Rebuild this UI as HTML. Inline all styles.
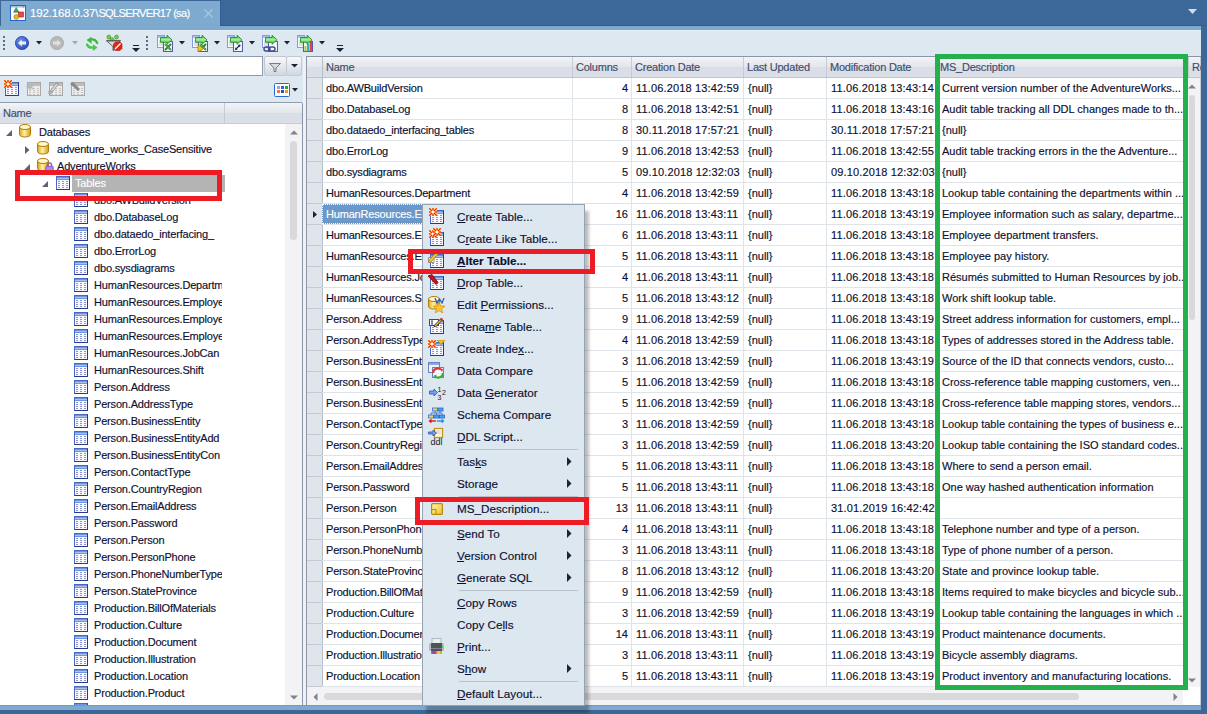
<!DOCTYPE html><html><head><meta charset="utf-8"><style>
html,body{margin:0;padding:0} body{width:1207px;height:714px;overflow:hidden;position:relative;background:#3b6899;font-family:"Liberation Sans", sans-serif;font-size:11px;color:#0c1030}
.t{position:absolute;white-space:nowrap;line-height:20px;height:20px;-webkit-text-stroke:0.15px currentColor}
</style></head><body>
<div style="position:absolute;left:1px;top:1px;width:219px;height:29px;background:#7eaacf"></div>
<div style="position:absolute;left:220px;top:0px;width:987px;height:26px;background:#3b6899;border-left:1px solid #345f90;border-bottom:1px solid #335a8a;box-sizing:border-box"></div>
<div style="position:absolute;left:0px;top:26px;width:1201px;height:4px;background:#7eaacf"></div>
<div style="position:absolute;left:0px;top:30px;width:1201px;height:1px;background:#e6eef5"></div>
<svg style="position:absolute;left:10px;top:5px" width="16" height="16" viewBox="0 0 16 16"><rect x="0.5" y="0.5" width="15" height="15" fill="#fafcff" stroke="#2a64c8"/><rect x="1" y="1" width="14" height="1.5" fill="#9ec0f0"/><rect x="12.5" y="1" width="1.5" height="1.5" fill="#f08030"/><path d="M6.2 2.5 L8.8 7.2 H3.6 Z" fill="#40a840" stroke="#1f6a1f" stroke-width="0.5"/><rect x="8.5" y="7" width="5" height="5" fill="#e84848" stroke="#a02020" stroke-width="0.6"/><circle cx="6.3" cy="12" r="2.4" fill="#e8b820" stroke="#a07810" stroke-width="0.6"/></svg>
<div class="t" style="left:30px;top:3px;color:#fff;font-size:11.5px"><span style="letter-spacing:-0.15px">192.168.0.37\</span><span style="letter-spacing:-0.75px;font-size:11.2px">SQLSERVER17 (sa)</span></div>
<svg style="position:absolute;left:204px;top:9px" width="9" height="9" viewBox="0 0 9 9"><path d="M0.5 0.5 L8.5 8.5 M8.5 0.5 L0.5 8.5" stroke="#a9c5de" stroke-width="1.3"/></svg>
<svg style="position:absolute;left:1188px;top:9px" width="9" height="5" viewBox="0 0 9 5"><path d="M0 0 H9 L4.5 5 Z" fill="#d9dcdf"/></svg>
<div style="position:absolute;left:0px;top:31px;width:1201px;height:25px;background:#dee8f1"></div>
<div style="position:absolute;left:307px;top:56px;width:894px;height:1px;background:#8a97a8"></div>
<div style="position:absolute;left:3px;top:36px;width:2px;height:2px;background:#5a6b85"></div><div style="position:absolute;left:3px;top:40px;width:2px;height:2px;background:#5a6b85"></div><div style="position:absolute;left:3px;top:44px;width:2px;height:2px;background:#5a6b85"></div><div style="position:absolute;left:3px;top:48px;width:2px;height:2px;background:#5a6b85"></div>
<div style="position:absolute;left:146px;top:36px;width:2px;height:2px;background:#5a6b85"></div><div style="position:absolute;left:146px;top:40px;width:2px;height:2px;background:#5a6b85"></div><div style="position:absolute;left:146px;top:44px;width:2px;height:2px;background:#5a6b85"></div><div style="position:absolute;left:146px;top:48px;width:2px;height:2px;background:#5a6b85"></div>
<svg style="position:absolute;left:15px;top:36px" width="14" height="14" viewBox="0 0 14 14"><defs><radialGradient id="bk" cx="0.4" cy="0.35" r="0.7"><stop offset="0" stop-color="#6a90f0"/><stop offset="1" stop-color="#2a4cc0"/></radialGradient></defs><circle cx="7" cy="7" r="6.6" fill="url(#bk)" stroke="#2a44a8" stroke-width="0.8"/><path d="M3 7 L6.8 3.4 V5.6 H11 V8.4 H6.8 V10.6 Z" fill="#f4f0e8"/></svg>
<svg style="position:absolute;left:36px;top:41px" width="6" height="4" viewBox="0 0 6 4"><path d="M0 0 H6 L3.0 3.5 Z" fill="#1a2438"/></svg>
<svg style="position:absolute;left:50px;top:36px" width="14" height="14" viewBox="0 0 14 14"><circle cx="7" cy="7" r="6.6" fill="#b8b8b8" stroke="#a8a8a8" stroke-width="0.8"/><path d="M11 7 L7.2 3.4 V5.6 H3 V8.4 H7.2 V10.6 Z" fill="#e0e0e0"/></svg>
<svg style="position:absolute;left:72px;top:41px" width="6" height="4" viewBox="0 0 6 4"><path d="M0 0 H6 L3.0 3.5 Z" fill="#a0a8b4"/></svg>
<svg style="position:absolute;left:85px;top:35px" width="14" height="17" viewBox="0 0 14 17"><path d="M5 4.8 Q10 3.2 12.3 8" stroke="#3cb83c" stroke-width="2.2" fill="none" stroke-linecap="round"/><path d="M1.5 5 L6.5 1.8 L6.5 8.8 Z" fill="#3cb83c"/><path d="M2 9.5 Q3.5 13.2 8.5 12.6" stroke="#48c848" stroke-width="2.2" fill="none" stroke-linecap="round"/><path d="M12.5 12.5 L8 9.3 L8 16 Z" fill="#48c848"/></svg>
<svg style="position:absolute;left:106px;top:34px" width="18" height="17" viewBox="0 0 18 17"><circle cx="2.8" cy="3" r="1.9" fill="#78d050" stroke="#3c9a20" stroke-width="0.7"/><circle cx="6" cy="5.6" r="1.9" fill="#78d050" stroke="#3c9a20" stroke-width="0.7"/><circle cx="10.5" cy="3" r="1.9" fill="#78d050" stroke="#3c9a20" stroke-width="0.7"/><path d="M0.5 6.8 H14.5 L8 12.5 V16.5 H7 V12.5 Z" fill="#dcdcdc" stroke="#5a5a5a" stroke-width="0.9"/><path d="M0.5 6.6 H14.5" stroke="#606060" stroke-width="1.4"/><path d="M9.5 8 L14 8 L16 10 V14.5 L14 16.5 H9.5 L7.5 14.5 V10 Z" fill="#e02818" stroke="#b01010" stroke-width="0.6"/><path d="M9 15 L14.5 9.5" stroke="#fff" stroke-width="1.2"/></svg>
<svg style="position:absolute;left:132px;top:45px" width="8" height="8" viewBox="0 0 8 8"><rect x="1" y="0" width="6" height="1" fill="#1a2438"/><path d="M0 3 H8 L4 7 Z" fill="#1a2438"/></svg>
<svg style="position:absolute;left:336px;top:45px" width="8" height="8" viewBox="0 0 8 8"><rect x="1" y="0" width="6" height="1" fill="#1a2438"/><path d="M0 3 H8 L4 7 Z" fill="#1a2438"/></svg>
<svg style="position:absolute;left:154px;top:35px" width="19" height="17" viewBox="0 0 19 17"><rect x="3.5" y="0.5" width="7" height="12" fill="#fafbff" stroke="#8a9ae0"/><rect x="4" y="1" width="6" height="2" fill="#a8c0f0"/><path d="M5 6 H9 M5 8 H9 M5 10 H9" stroke="#b8b8c0" stroke-width="0.8"/><rect x="9.5" y="6.5" width="9" height="10" fill="#fbfbfd" stroke="#5a5aa8" stroke-width="1.1"/><path d="M11 9 L17 15 M17 9 L11 15" stroke="#2a8a2a" stroke-width="2"/><path d="M11 9 L17 15" stroke="#60c060" stroke-width="0.8"/><defs><linearGradient id="eg0" x1="0" y1="0" x2="0" y2="1"><stop offset="0" stop-color="#30b030"/><stop offset="0.5" stop-color="#a8f0a0"/><stop offset="1" stop-color="#20a020"/></linearGradient></defs><path d="M6.5 2.5 H13 V0.3 L18 4.8 L13 9.3 V7.3 H6.5 Z" fill="url(#eg0)" stroke="#158a15" stroke-width="0.8"/></svg>
<svg style="position:absolute;left:179px;top:41px" width="6" height="4" viewBox="0 0 6 4"><path d="M0 0 H6 L3.0 3.5 Z" fill="#1a2438"/></svg>
<svg style="position:absolute;left:189px;top:35px" width="19" height="17" viewBox="0 0 19 17"><rect x="3.5" y="0.5" width="7" height="12" fill="#fafbff" stroke="#8a9ae0"/><rect x="4" y="1" width="6" height="2" fill="#a8c0f0"/><path d="M5 6 H9 M5 8 H9 M5 10 H9" stroke="#b8b8c0" stroke-width="0.8"/><rect x="9.5" y="6.5" width="9" height="10" fill="#fbfbfd" stroke="#5a5aa8" stroke-width="1.1"/><path d="M11 9 L17 15 M17 9 L11 15" stroke="#2a8a2a" stroke-width="2"/><path d="M11 9 L17 15" stroke="#60c060" stroke-width="0.8"/><path d="M9 10 L14.5 13.5 L9 17 Z" fill="#f8c820" stroke="#a07800" stroke-width="0.7"/><defs><linearGradient id="eg1" x1="0" y1="0" x2="0" y2="1"><stop offset="0" stop-color="#30b030"/><stop offset="0.5" stop-color="#a8f0a0"/><stop offset="1" stop-color="#20a020"/></linearGradient></defs><path d="M6.5 2.5 H13 V0.3 L18 4.8 L13 9.3 V7.3 H6.5 Z" fill="url(#eg1)" stroke="#158a15" stroke-width="0.8"/></svg>
<svg style="position:absolute;left:214px;top:41px" width="6" height="4" viewBox="0 0 6 4"><path d="M0 0 H6 L3.0 3.5 Z" fill="#1a2438"/></svg>
<svg style="position:absolute;left:224px;top:35px" width="19" height="17" viewBox="0 0 19 17"><rect x="3.5" y="0.5" width="7" height="12" fill="#fafbff" stroke="#8a9ae0"/><rect x="4" y="1" width="6" height="2" fill="#a8c0f0"/><path d="M5 6 H9 M5 8 H9 M5 10 H9" stroke="#b8b8c0" stroke-width="0.8"/><rect x="9.5" y="6.5" width="9" height="10" fill="#fbfbfd" stroke="#5a5aa8" stroke-width="1.1"/><path d="M11.5 14.5 L16 10" stroke="#202860" stroke-width="1.3"/><path d="M16.5 9.5 L13.8 10 L16 12.2 Z M11 15 L13.7 14.5 L11.5 12.3 Z" fill="#202860"/><defs><linearGradient id="eg2" x1="0" y1="0" x2="0" y2="1"><stop offset="0" stop-color="#30b030"/><stop offset="0.5" stop-color="#a8f0a0"/><stop offset="1" stop-color="#20a020"/></linearGradient></defs><path d="M6.5 2.5 H13 V0.3 L18 4.8 L13 9.3 V7.3 H6.5 Z" fill="url(#eg2)" stroke="#158a15" stroke-width="0.8"/></svg>
<svg style="position:absolute;left:249px;top:41px" width="6" height="4" viewBox="0 0 6 4"><path d="M0 0 H6 L3.0 3.5 Z" fill="#1a2438"/></svg>
<svg style="position:absolute;left:259px;top:35px" width="19" height="17" viewBox="0 0 19 17"><rect x="3.5" y="0.5" width="7" height="12" fill="#fafbff" stroke="#8a9ae0"/><rect x="4" y="1" width="6" height="2" fill="#a8c0f0"/><path d="M5 6 H9 M5 8 H9 M5 10 H9" stroke="#b8b8c0" stroke-width="0.8"/><rect x="9.5" y="6.5" width="9" height="10" fill="#fbfbfd" stroke="#5a5aa8" stroke-width="1.1"/><rect x="5" y="12" width="6" height="4" rx="2" fill="none" stroke="#404890" stroke-width="1.4"/><rect x="10" y="12" width="6" height="4" rx="2" fill="none" stroke="#404890" stroke-width="1.4"/><defs><linearGradient id="eg3" x1="0" y1="0" x2="0" y2="1"><stop offset="0" stop-color="#30b030"/><stop offset="0.5" stop-color="#a8f0a0"/><stop offset="1" stop-color="#20a020"/></linearGradient></defs><path d="M6.5 2.5 H13 V0.3 L18 4.8 L13 9.3 V7.3 H6.5 Z" fill="url(#eg3)" stroke="#158a15" stroke-width="0.8"/></svg>
<svg style="position:absolute;left:284px;top:41px" width="6" height="4" viewBox="0 0 6 4"><path d="M0 0 H6 L3.0 3.5 Z" fill="#1a2438"/></svg>
<svg style="position:absolute;left:294px;top:35px" width="19" height="17" viewBox="0 0 19 17"><rect x="3.5" y="0.5" width="7" height="12" fill="#fafbff" stroke="#8a9ae0"/><rect x="4" y="1" width="6" height="2" fill="#a8c0f0"/><path d="M5 6 H9 M5 8 H9 M5 10 H9" stroke="#b8b8c0" stroke-width="0.8"/><rect x="9.5" y="6.5" width="9" height="10" fill="#fbfbfd" stroke="#5a5aa8" stroke-width="1.1"/><rect x="10.5" y="11" width="2" height="5" fill="#a0d030"/><rect x="13" y="9" width="2" height="7" fill="#30b0e0"/><rect x="15.5" y="7" width="2.5" height="9" fill="#e84830"/><defs><linearGradient id="eg4" x1="0" y1="0" x2="0" y2="1"><stop offset="0" stop-color="#30b030"/><stop offset="0.5" stop-color="#a8f0a0"/><stop offset="1" stop-color="#20a020"/></linearGradient></defs><path d="M6.5 2.5 H13 V0.3 L18 4.8 L13 9.3 V7.3 H6.5 Z" fill="url(#eg4)" stroke="#158a15" stroke-width="0.8"/></svg>
<svg style="position:absolute;left:319px;top:41px" width="6" height="4" viewBox="0 0 6 4"><path d="M0 0 H6 L3.0 3.5 Z" fill="#1a2438"/></svg>
<div style="position:absolute;left:0px;top:56px;width:302px;height:650px;background:#dee8f1"></div>
<div style="position:absolute;left:0px;top:56px;width:263px;height:20px;background:#fff;border:1px solid #8e9cb2;border-left:none;box-sizing:border-box"></div>
<div style="position:absolute;left:0px;top:103px;width:302px;height:603px;background:#fff"></div>
<div style="position:absolute;left:264px;top:56px;width:23px;height:20px;background:linear-gradient(#f7f8fa,#e6e9ee 50%,#d2d7e0);border:1px solid #c4c8d0;box-sizing:border-box;border-radius:2px"></div>
<svg style="position:absolute;left:269px;top:63px" width="12" height="9" viewBox="0 0 12 9"><path d="M0.5 0.5 H11.5 L7 5 V8.5 H5 V5 Z" fill="#d8dade" stroke="#6c727c" stroke-width="0.9"/></svg>
<div style="position:absolute;left:286px;top:56px;width:16px;height:20px;background:linear-gradient(#f7f8fa,#e6e9ee 50%,#d2d7e0);border:1px solid #c4c8d0;box-sizing:border-box;border-radius:2px"></div>
<svg style="position:absolute;left:291px;top:64px" width="7" height="4" viewBox="0 0 7 4"><path d="M0 0 H7 L3.5 3.5 Z" fill="#1a2438"/></svg>
<div style="position:absolute;left:0px;top:76px;width:302px;height:26px;background:#dee8f1"></div>
<div style="position:absolute;left:0px;top:102px;width:302px;height:1px;background:#8e9cb2"></div>
<svg style="position:absolute;left:5px;top:82px" width="14" height="14" viewBox="0 0 14 14"><rect x="0.5" y="0.5" width="13" height="13" fill="#f8f8fe" stroke="#4a68c0"/><path d="M0.5 13.5 H13.5 V0.5" fill="none" stroke="#28388a"/><rect x="1" y="1" width="12" height="3" fill="#6a94e4"/><rect x="1" y="2" width="12" height="1" fill="#a6c2f2"/><g fill="#8a92d8"><rect x="2" y="5" width="2" height="1"/><rect x="2" y="7" width="2" height="1"/><rect x="2" y="9" width="2" height="1"/><rect x="2" y="11" width="2" height="1"/><rect x="6" y="5" width="2" height="1"/><rect x="6" y="7" width="2" height="1"/><rect x="6" y="9" width="2" height="1"/><rect x="6" y="11" width="2" height="1"/><rect x="10" y="5" width="2" height="1"/><rect x="10" y="7" width="2" height="1"/><rect x="10" y="9" width="2" height="1"/><rect x="10" y="11" width="2" height="1"/></g></svg>
<svg style="position:absolute;left:4px;top:80px" width="8" height="8" viewBox="0 0 8 8"><rect x="0.3" y="0.3" width="7.4" height="7.4" fill="#fff48a"/><path d="M5.60 4.00 L8.00 4.00" stroke="#f01a00" stroke-width="1.3"/><path d="M5.13 5.13 L7.68 7.68" stroke="#f01a00" stroke-width="1.3"/><path d="M4.00 5.60 L4.00 8.00" stroke="#f01a00" stroke-width="1.3"/><path d="M2.87 5.13 L0.32 7.68" stroke="#f01a00" stroke-width="1.3"/><path d="M2.40 4.00 L0.00 4.00" stroke="#f01a00" stroke-width="1.3"/><path d="M2.87 2.87 L0.32 0.32" stroke="#f01a00" stroke-width="1.3"/><path d="M4.00 2.40 L4.00 0.00" stroke="#f01a00" stroke-width="1.3"/><path d="M5.13 2.87 L7.68 0.32" stroke="#f01a00" stroke-width="1.3"/><circle cx="4.0" cy="4.0" r="1.1" fill="#ffffff"/></svg>
<svg style="position:absolute;left:26px;top:82px" width="15" height="15" viewBox="0 0 15 15"><rect x="1.5" y="0.5" width="13" height="13" fill="#ececec" stroke="#a8a8a8"/><rect x="2" y="1" width="12" height="3" fill="#bcbcbc"/><g fill="#c4c4c4"><rect x="3" y="6" width="2" height="1"/><rect x="3" y="8" width="2" height="1"/><rect x="3" y="10" width="2" height="1"/><rect x="3" y="12" width="2" height="1"/><rect x="7" y="6" width="2" height="1"/><rect x="7" y="8" width="2" height="1"/><rect x="7" y="10" width="2" height="1"/><rect x="7" y="12" width="2" height="1"/><rect x="11" y="6" width="2" height="1"/><rect x="11" y="8" width="2" height="1"/><rect x="11" y="10" width="2" height="1"/><rect x="11" y="12" width="2" height="1"/></g><g stroke="#b8b8b8" stroke-width="1.2"><path d="M4 0 V8 M0 4 H8 M1 1 L7 7 M7 1 L1 7"/></g></svg>
<svg style="position:absolute;left:48px;top:82px" width="15" height="15" viewBox="0 0 15 15"><rect x="1.5" y="0.5" width="13" height="13" fill="#ececec" stroke="#a8a8a8"/><rect x="2" y="1" width="12" height="3" fill="#bcbcbc"/><g fill="#c4c4c4"><rect x="3" y="6" width="2" height="1"/><rect x="3" y="8" width="2" height="1"/><rect x="3" y="10" width="2" height="1"/><rect x="3" y="12" width="2" height="1"/><rect x="7" y="6" width="2" height="1"/><rect x="7" y="8" width="2" height="1"/><rect x="7" y="10" width="2" height="1"/><rect x="7" y="12" width="2" height="1"/><rect x="11" y="6" width="2" height="1"/><rect x="11" y="8" width="2" height="1"/><rect x="11" y="10" width="2" height="1"/><rect x="11" y="12" width="2" height="1"/></g><path d="M2 11 L9 2" stroke="#9a9a9a" stroke-width="3" stroke-linecap="round"/><path d="M2 11 L9 2" stroke="#dcdcdc" stroke-width="1.5"/><path d="M0.5 9.5 H5" stroke="#a0a0a0" stroke-width="1.5"/></svg>
<svg style="position:absolute;left:70px;top:82px" width="15" height="15" viewBox="0 0 15 15"><rect x="1.5" y="0.5" width="13" height="13" fill="#ececec" stroke="#a8a8a8"/><rect x="2" y="1" width="12" height="3" fill="#bcbcbc"/><g fill="#c4c4c4"><rect x="3" y="6" width="2" height="1"/><rect x="3" y="8" width="2" height="1"/><rect x="3" y="10" width="2" height="1"/><rect x="3" y="12" width="2" height="1"/><rect x="7" y="6" width="2" height="1"/><rect x="7" y="8" width="2" height="1"/><rect x="7" y="10" width="2" height="1"/><rect x="7" y="12" width="2" height="1"/><rect x="11" y="6" width="2" height="1"/><rect x="11" y="8" width="2" height="1"/><rect x="11" y="10" width="2" height="1"/><rect x="11" y="12" width="2" height="1"/></g><path d="M0 2 L3 0 L10 7 L8 9 Z" fill="#8a8a8a"/></svg>
<svg style="position:absolute;left:274px;top:83px" width="16" height="14" viewBox="0 0 16 14"><rect x="0.5" y="0.5" width="15" height="13" rx="1" fill="#fff" stroke="#2a6ad0"/><rect x="3" y="3" width="3" height="3" fill="#9aa0e0"/><rect x="7" y="3" width="3" height="3" fill="#2a6ad0"/><rect x="11" y="3" width="3" height="3" fill="#30a040"/><rect x="3" y="7" width="3" height="3" fill="#f07050"/><rect x="7" y="7" width="3" height="3" fill="#2a50b0"/><rect x="11" y="7" width="3" height="3" fill="#e0a030"/></svg>
<svg style="position:absolute;left:292px;top:88px" width="6" height="4" viewBox="0 0 6 4"><path d="M0 0 H6 L3.0 3.5 Z" fill="#1a2438"/></svg>
<div style="position:absolute;left:0px;top:103px;width:302px;height:20px;background:linear-gradient(#f3f5f7 0%,#e9ecf0 25%,#e3e6ed 50%,#dadee7 50%,#dadee7 90%,#dfe2ea 100%)"></div>
<div style="position:absolute;left:0px;top:123px;width:302px;height:1px;background:#c5cad5"></div>
<div style="position:absolute;left:224px;top:103px;width:1px;height:20px;background:#c5cad5"></div>
<div class="t" style="left:3px;top:103px;color:#3f4d6b;letter-spacing:-0.22px">Name</div>
<svg style="position:absolute;left:6px;top:130px" width="7" height="7" viewBox="0 0 7 7"><path d="M6 0 V6 H0 Z" fill="#5a6478"/></svg>
<svg style="position:absolute;left:19px;top:124px" width="12" height="14" viewBox="0 0 12 14"><defs><linearGradient id="dbg" x1="0" x2="1"><stop offset="0" stop-color="#d9a520"/><stop offset="0.45" stop-color="#fff2a0"/><stop offset="1" stop-color="#d49a18"/></linearGradient></defs><path d="M0.5 3 V10.5 A5.5 2.5 0 0 0 11.5 10.5 V3" fill="url(#dbg)" stroke="#b07c10"/><ellipse cx="6" cy="3" rx="5.5" ry="2.5" fill="#fff7c8" stroke="#b07c10"/></svg>
<div class="t" style="left:39px;top:123px;line-height:18px;letter-spacing:-0.18px">Databases</div>
<svg style="position:absolute;left:25px;top:146px" width="5" height="8" viewBox="0 0 5 8"><path d="M0 0 L4.5 4 L0 8 Z" fill="#5a6478"/></svg>
<svg style="position:absolute;left:37px;top:141px" width="12" height="14" viewBox="0 0 12 14"><defs><linearGradient id="dbg" x1="0" x2="1"><stop offset="0" stop-color="#d9a520"/><stop offset="0.45" stop-color="#fff2a0"/><stop offset="1" stop-color="#d49a18"/></linearGradient></defs><path d="M0.5 3 V10.5 A5.5 2.5 0 0 0 11.5 10.5 V3" fill="url(#dbg)" stroke="#b07c10"/><ellipse cx="6" cy="3" rx="5.5" ry="2.5" fill="#fff7c8" stroke="#b07c10"/></svg>
<div class="t" style="left:57px;top:140px;line-height:18px;letter-spacing:-0.18px">adventure_works_CaseSensitive</div>
<svg style="position:absolute;left:24px;top:164px" width="7" height="7" viewBox="0 0 7 7"><path d="M6 0 V6 H0 Z" fill="#5a6478"/></svg>
<svg style="position:absolute;left:37px;top:158px" width="12" height="14" viewBox="0 0 12 14"><defs><linearGradient id="dbg" x1="0" x2="1"><stop offset="0" stop-color="#d9a520"/><stop offset="0.45" stop-color="#fff2a0"/><stop offset="1" stop-color="#d49a18"/></linearGradient></defs><path d="M0.5 3 V10.5 A5.5 2.5 0 0 0 11.5 10.5 V3" fill="url(#dbg)" stroke="#b07c10"/><ellipse cx="6" cy="3" rx="5.5" ry="2.5" fill="#fff7c8" stroke="#b07c10"/></svg>
<svg style="position:absolute;left:45px;top:162px" width="9" height="9" viewBox="0 0 9 9"><path d="M2.5 4.5 V3 A2 2 0 0 1 6.5 3 V4.5" fill="none" stroke="#8a5ad0" stroke-width="1.4"/><rect x="0.8" y="4.3" width="7.4" height="4.5" rx="0.8" fill="#b08ae8" stroke="#7a48c0" stroke-width="0.8"/></svg>
<div class="t" style="left:57px;top:157px;line-height:18px;letter-spacing:-0.18px">AdventureWorks</div>
<svg style="position:absolute;left:42px;top:181px" width="7" height="7" viewBox="0 0 7 7"><path d="M6 0 V6 H0 Z" fill="#5a6478"/></svg>
<svg style="position:absolute;left:56px;top:176px" width="14" height="14" viewBox="0 0 14 14"><rect x="0.5" y="0.5" width="13" height="13" fill="#f8f8fe" stroke="#4a68c0"/><path d="M0.5 13.5 H13.5 V0.5" fill="none" stroke="#28388a"/><rect x="1" y="1" width="12" height="3" fill="#6a94e4"/><rect x="1" y="2" width="12" height="1" fill="#a6c2f2"/><g fill="#8a92d8"><rect x="2" y="5" width="2" height="1"/><rect x="2" y="7" width="2" height="1"/><rect x="2" y="9" width="2" height="1"/><rect x="2" y="11" width="2" height="1"/><rect x="6" y="5" width="2" height="1"/><rect x="6" y="7" width="2" height="1"/><rect x="6" y="9" width="2" height="1"/><rect x="6" y="11" width="2" height="1"/><rect x="10" y="5" width="2" height="1"/><rect x="10" y="7" width="2" height="1"/><rect x="10" y="9" width="2" height="1"/><rect x="10" y="11" width="2" height="1"/></g></svg>
<div style="position:absolute;left:72px;top:175px;width:153px;height:17px;background:#b4b4b4"></div>
<div class="t" style="left:75px;top:174px;line-height:18px;color:#fff;letter-spacing:-0.18px">Tables</div>
<div style="position:absolute;left:0;top:124px;width:222px;height:581px;overflow:hidden">
<svg style="position:absolute;left:74px;top:69px" width="14" height="14" viewBox="0 0 14 14"><rect x="0.5" y="0.5" width="13" height="13" fill="#f8f8fe" stroke="#4a68c0"/><path d="M0.5 13.5 H13.5 V0.5" fill="none" stroke="#28388a"/><rect x="1" y="1" width="12" height="3" fill="#6a94e4"/><rect x="1" y="2" width="12" height="1" fill="#a6c2f2"/><g fill="#8a92d8"><rect x="2" y="5" width="2" height="1"/><rect x="2" y="7" width="2" height="1"/><rect x="2" y="9" width="2" height="1"/><rect x="2" y="11" width="2" height="1"/><rect x="6" y="5" width="2" height="1"/><rect x="6" y="7" width="2" height="1"/><rect x="6" y="9" width="2" height="1"/><rect x="6" y="11" width="2" height="1"/><rect x="10" y="5" width="2" height="1"/><rect x="10" y="7" width="2" height="1"/><rect x="10" y="9" width="2" height="1"/><rect x="10" y="11" width="2" height="1"/></g></svg>
<div class="t" style="left:94px;top:67px;line-height:18px;letter-spacing:-0.18px">dbo.AWBuildVersion</div>
<svg style="position:absolute;left:74px;top:86px" width="14" height="14" viewBox="0 0 14 14"><rect x="0.5" y="0.5" width="13" height="13" fill="#f8f8fe" stroke="#4a68c0"/><path d="M0.5 13.5 H13.5 V0.5" fill="none" stroke="#28388a"/><rect x="1" y="1" width="12" height="3" fill="#6a94e4"/><rect x="1" y="2" width="12" height="1" fill="#a6c2f2"/><g fill="#8a92d8"><rect x="2" y="5" width="2" height="1"/><rect x="2" y="7" width="2" height="1"/><rect x="2" y="9" width="2" height="1"/><rect x="2" y="11" width="2" height="1"/><rect x="6" y="5" width="2" height="1"/><rect x="6" y="7" width="2" height="1"/><rect x="6" y="9" width="2" height="1"/><rect x="6" y="11" width="2" height="1"/><rect x="10" y="5" width="2" height="1"/><rect x="10" y="7" width="2" height="1"/><rect x="10" y="9" width="2" height="1"/><rect x="10" y="11" width="2" height="1"/></g></svg>
<div class="t" style="left:94px;top:84px;line-height:18px;letter-spacing:-0.18px">dbo.DatabaseLog</div>
<svg style="position:absolute;left:74px;top:103px" width="14" height="14" viewBox="0 0 14 14"><rect x="0.5" y="0.5" width="13" height="13" fill="#f8f8fe" stroke="#4a68c0"/><path d="M0.5 13.5 H13.5 V0.5" fill="none" stroke="#28388a"/><rect x="1" y="1" width="12" height="3" fill="#6a94e4"/><rect x="1" y="2" width="12" height="1" fill="#a6c2f2"/><g fill="#8a92d8"><rect x="2" y="5" width="2" height="1"/><rect x="2" y="7" width="2" height="1"/><rect x="2" y="9" width="2" height="1"/><rect x="2" y="11" width="2" height="1"/><rect x="6" y="5" width="2" height="1"/><rect x="6" y="7" width="2" height="1"/><rect x="6" y="9" width="2" height="1"/><rect x="6" y="11" width="2" height="1"/><rect x="10" y="5" width="2" height="1"/><rect x="10" y="7" width="2" height="1"/><rect x="10" y="9" width="2" height="1"/><rect x="10" y="11" width="2" height="1"/></g></svg>
<div class="t" style="left:94px;top:101px;line-height:18px;letter-spacing:-0.18px">dbo.dataedo_interfacing_</div>
<svg style="position:absolute;left:74px;top:120px" width="14" height="14" viewBox="0 0 14 14"><rect x="0.5" y="0.5" width="13" height="13" fill="#f8f8fe" stroke="#4a68c0"/><path d="M0.5 13.5 H13.5 V0.5" fill="none" stroke="#28388a"/><rect x="1" y="1" width="12" height="3" fill="#6a94e4"/><rect x="1" y="2" width="12" height="1" fill="#a6c2f2"/><g fill="#8a92d8"><rect x="2" y="5" width="2" height="1"/><rect x="2" y="7" width="2" height="1"/><rect x="2" y="9" width="2" height="1"/><rect x="2" y="11" width="2" height="1"/><rect x="6" y="5" width="2" height="1"/><rect x="6" y="7" width="2" height="1"/><rect x="6" y="9" width="2" height="1"/><rect x="6" y="11" width="2" height="1"/><rect x="10" y="5" width="2" height="1"/><rect x="10" y="7" width="2" height="1"/><rect x="10" y="9" width="2" height="1"/><rect x="10" y="11" width="2" height="1"/></g></svg>
<div class="t" style="left:94px;top:118px;line-height:18px;letter-spacing:-0.18px">dbo.ErrorLog</div>
<svg style="position:absolute;left:74px;top:137px" width="14" height="14" viewBox="0 0 14 14"><rect x="0.5" y="0.5" width="13" height="13" fill="#f8f8fe" stroke="#4a68c0"/><path d="M0.5 13.5 H13.5 V0.5" fill="none" stroke="#28388a"/><rect x="1" y="1" width="12" height="3" fill="#6a94e4"/><rect x="1" y="2" width="12" height="1" fill="#a6c2f2"/><g fill="#8a92d8"><rect x="2" y="5" width="2" height="1"/><rect x="2" y="7" width="2" height="1"/><rect x="2" y="9" width="2" height="1"/><rect x="2" y="11" width="2" height="1"/><rect x="6" y="5" width="2" height="1"/><rect x="6" y="7" width="2" height="1"/><rect x="6" y="9" width="2" height="1"/><rect x="6" y="11" width="2" height="1"/><rect x="10" y="5" width="2" height="1"/><rect x="10" y="7" width="2" height="1"/><rect x="10" y="9" width="2" height="1"/><rect x="10" y="11" width="2" height="1"/></g></svg>
<div class="t" style="left:94px;top:135px;line-height:18px;letter-spacing:-0.18px">dbo.sysdiagrams</div>
<svg style="position:absolute;left:74px;top:154px" width="14" height="14" viewBox="0 0 14 14"><rect x="0.5" y="0.5" width="13" height="13" fill="#f8f8fe" stroke="#4a68c0"/><path d="M0.5 13.5 H13.5 V0.5" fill="none" stroke="#28388a"/><rect x="1" y="1" width="12" height="3" fill="#6a94e4"/><rect x="1" y="2" width="12" height="1" fill="#a6c2f2"/><g fill="#8a92d8"><rect x="2" y="5" width="2" height="1"/><rect x="2" y="7" width="2" height="1"/><rect x="2" y="9" width="2" height="1"/><rect x="2" y="11" width="2" height="1"/><rect x="6" y="5" width="2" height="1"/><rect x="6" y="7" width="2" height="1"/><rect x="6" y="9" width="2" height="1"/><rect x="6" y="11" width="2" height="1"/><rect x="10" y="5" width="2" height="1"/><rect x="10" y="7" width="2" height="1"/><rect x="10" y="9" width="2" height="1"/><rect x="10" y="11" width="2" height="1"/></g></svg>
<div class="t" style="left:94px;top:152px;line-height:18px;letter-spacing:-0.18px">HumanResources.Departm</div>
<svg style="position:absolute;left:74px;top:171px" width="14" height="14" viewBox="0 0 14 14"><rect x="0.5" y="0.5" width="13" height="13" fill="#f8f8fe" stroke="#4a68c0"/><path d="M0.5 13.5 H13.5 V0.5" fill="none" stroke="#28388a"/><rect x="1" y="1" width="12" height="3" fill="#6a94e4"/><rect x="1" y="2" width="12" height="1" fill="#a6c2f2"/><g fill="#8a92d8"><rect x="2" y="5" width="2" height="1"/><rect x="2" y="7" width="2" height="1"/><rect x="2" y="9" width="2" height="1"/><rect x="2" y="11" width="2" height="1"/><rect x="6" y="5" width="2" height="1"/><rect x="6" y="7" width="2" height="1"/><rect x="6" y="9" width="2" height="1"/><rect x="6" y="11" width="2" height="1"/><rect x="10" y="5" width="2" height="1"/><rect x="10" y="7" width="2" height="1"/><rect x="10" y="9" width="2" height="1"/><rect x="10" y="11" width="2" height="1"/></g></svg>
<div class="t" style="left:94px;top:169px;line-height:18px;letter-spacing:-0.18px">HumanResources.Employe</div>
<svg style="position:absolute;left:74px;top:188px" width="14" height="14" viewBox="0 0 14 14"><rect x="0.5" y="0.5" width="13" height="13" fill="#f8f8fe" stroke="#4a68c0"/><path d="M0.5 13.5 H13.5 V0.5" fill="none" stroke="#28388a"/><rect x="1" y="1" width="12" height="3" fill="#6a94e4"/><rect x="1" y="2" width="12" height="1" fill="#a6c2f2"/><g fill="#8a92d8"><rect x="2" y="5" width="2" height="1"/><rect x="2" y="7" width="2" height="1"/><rect x="2" y="9" width="2" height="1"/><rect x="2" y="11" width="2" height="1"/><rect x="6" y="5" width="2" height="1"/><rect x="6" y="7" width="2" height="1"/><rect x="6" y="9" width="2" height="1"/><rect x="6" y="11" width="2" height="1"/><rect x="10" y="5" width="2" height="1"/><rect x="10" y="7" width="2" height="1"/><rect x="10" y="9" width="2" height="1"/><rect x="10" y="11" width="2" height="1"/></g></svg>
<div class="t" style="left:94px;top:186px;line-height:18px;letter-spacing:-0.18px">HumanResources.Employe</div>
<svg style="position:absolute;left:74px;top:205px" width="14" height="14" viewBox="0 0 14 14"><rect x="0.5" y="0.5" width="13" height="13" fill="#f8f8fe" stroke="#4a68c0"/><path d="M0.5 13.5 H13.5 V0.5" fill="none" stroke="#28388a"/><rect x="1" y="1" width="12" height="3" fill="#6a94e4"/><rect x="1" y="2" width="12" height="1" fill="#a6c2f2"/><g fill="#8a92d8"><rect x="2" y="5" width="2" height="1"/><rect x="2" y="7" width="2" height="1"/><rect x="2" y="9" width="2" height="1"/><rect x="2" y="11" width="2" height="1"/><rect x="6" y="5" width="2" height="1"/><rect x="6" y="7" width="2" height="1"/><rect x="6" y="9" width="2" height="1"/><rect x="6" y="11" width="2" height="1"/><rect x="10" y="5" width="2" height="1"/><rect x="10" y="7" width="2" height="1"/><rect x="10" y="9" width="2" height="1"/><rect x="10" y="11" width="2" height="1"/></g></svg>
<div class="t" style="left:94px;top:203px;line-height:18px;letter-spacing:-0.18px">HumanResources.Employe</div>
<svg style="position:absolute;left:74px;top:222px" width="14" height="14" viewBox="0 0 14 14"><rect x="0.5" y="0.5" width="13" height="13" fill="#f8f8fe" stroke="#4a68c0"/><path d="M0.5 13.5 H13.5 V0.5" fill="none" stroke="#28388a"/><rect x="1" y="1" width="12" height="3" fill="#6a94e4"/><rect x="1" y="2" width="12" height="1" fill="#a6c2f2"/><g fill="#8a92d8"><rect x="2" y="5" width="2" height="1"/><rect x="2" y="7" width="2" height="1"/><rect x="2" y="9" width="2" height="1"/><rect x="2" y="11" width="2" height="1"/><rect x="6" y="5" width="2" height="1"/><rect x="6" y="7" width="2" height="1"/><rect x="6" y="9" width="2" height="1"/><rect x="6" y="11" width="2" height="1"/><rect x="10" y="5" width="2" height="1"/><rect x="10" y="7" width="2" height="1"/><rect x="10" y="9" width="2" height="1"/><rect x="10" y="11" width="2" height="1"/></g></svg>
<div class="t" style="left:94px;top:220px;line-height:18px;letter-spacing:-0.18px">HumanResources.JobCan</div>
<svg style="position:absolute;left:74px;top:239px" width="14" height="14" viewBox="0 0 14 14"><rect x="0.5" y="0.5" width="13" height="13" fill="#f8f8fe" stroke="#4a68c0"/><path d="M0.5 13.5 H13.5 V0.5" fill="none" stroke="#28388a"/><rect x="1" y="1" width="12" height="3" fill="#6a94e4"/><rect x="1" y="2" width="12" height="1" fill="#a6c2f2"/><g fill="#8a92d8"><rect x="2" y="5" width="2" height="1"/><rect x="2" y="7" width="2" height="1"/><rect x="2" y="9" width="2" height="1"/><rect x="2" y="11" width="2" height="1"/><rect x="6" y="5" width="2" height="1"/><rect x="6" y="7" width="2" height="1"/><rect x="6" y="9" width="2" height="1"/><rect x="6" y="11" width="2" height="1"/><rect x="10" y="5" width="2" height="1"/><rect x="10" y="7" width="2" height="1"/><rect x="10" y="9" width="2" height="1"/><rect x="10" y="11" width="2" height="1"/></g></svg>
<div class="t" style="left:94px;top:237px;line-height:18px;letter-spacing:-0.18px">HumanResources.Shift</div>
<svg style="position:absolute;left:74px;top:256px" width="14" height="14" viewBox="0 0 14 14"><rect x="0.5" y="0.5" width="13" height="13" fill="#f8f8fe" stroke="#4a68c0"/><path d="M0.5 13.5 H13.5 V0.5" fill="none" stroke="#28388a"/><rect x="1" y="1" width="12" height="3" fill="#6a94e4"/><rect x="1" y="2" width="12" height="1" fill="#a6c2f2"/><g fill="#8a92d8"><rect x="2" y="5" width="2" height="1"/><rect x="2" y="7" width="2" height="1"/><rect x="2" y="9" width="2" height="1"/><rect x="2" y="11" width="2" height="1"/><rect x="6" y="5" width="2" height="1"/><rect x="6" y="7" width="2" height="1"/><rect x="6" y="9" width="2" height="1"/><rect x="6" y="11" width="2" height="1"/><rect x="10" y="5" width="2" height="1"/><rect x="10" y="7" width="2" height="1"/><rect x="10" y="9" width="2" height="1"/><rect x="10" y="11" width="2" height="1"/></g></svg>
<div class="t" style="left:94px;top:254px;line-height:18px;letter-spacing:-0.18px">Person.Address</div>
<svg style="position:absolute;left:74px;top:273px" width="14" height="14" viewBox="0 0 14 14"><rect x="0.5" y="0.5" width="13" height="13" fill="#f8f8fe" stroke="#4a68c0"/><path d="M0.5 13.5 H13.5 V0.5" fill="none" stroke="#28388a"/><rect x="1" y="1" width="12" height="3" fill="#6a94e4"/><rect x="1" y="2" width="12" height="1" fill="#a6c2f2"/><g fill="#8a92d8"><rect x="2" y="5" width="2" height="1"/><rect x="2" y="7" width="2" height="1"/><rect x="2" y="9" width="2" height="1"/><rect x="2" y="11" width="2" height="1"/><rect x="6" y="5" width="2" height="1"/><rect x="6" y="7" width="2" height="1"/><rect x="6" y="9" width="2" height="1"/><rect x="6" y="11" width="2" height="1"/><rect x="10" y="5" width="2" height="1"/><rect x="10" y="7" width="2" height="1"/><rect x="10" y="9" width="2" height="1"/><rect x="10" y="11" width="2" height="1"/></g></svg>
<div class="t" style="left:94px;top:271px;line-height:18px;letter-spacing:-0.18px">Person.AddressType</div>
<svg style="position:absolute;left:74px;top:290px" width="14" height="14" viewBox="0 0 14 14"><rect x="0.5" y="0.5" width="13" height="13" fill="#f8f8fe" stroke="#4a68c0"/><path d="M0.5 13.5 H13.5 V0.5" fill="none" stroke="#28388a"/><rect x="1" y="1" width="12" height="3" fill="#6a94e4"/><rect x="1" y="2" width="12" height="1" fill="#a6c2f2"/><g fill="#8a92d8"><rect x="2" y="5" width="2" height="1"/><rect x="2" y="7" width="2" height="1"/><rect x="2" y="9" width="2" height="1"/><rect x="2" y="11" width="2" height="1"/><rect x="6" y="5" width="2" height="1"/><rect x="6" y="7" width="2" height="1"/><rect x="6" y="9" width="2" height="1"/><rect x="6" y="11" width="2" height="1"/><rect x="10" y="5" width="2" height="1"/><rect x="10" y="7" width="2" height="1"/><rect x="10" y="9" width="2" height="1"/><rect x="10" y="11" width="2" height="1"/></g></svg>
<div class="t" style="left:94px;top:288px;line-height:18px;letter-spacing:-0.18px">Person.BusinessEntity</div>
<svg style="position:absolute;left:74px;top:307px" width="14" height="14" viewBox="0 0 14 14"><rect x="0.5" y="0.5" width="13" height="13" fill="#f8f8fe" stroke="#4a68c0"/><path d="M0.5 13.5 H13.5 V0.5" fill="none" stroke="#28388a"/><rect x="1" y="1" width="12" height="3" fill="#6a94e4"/><rect x="1" y="2" width="12" height="1" fill="#a6c2f2"/><g fill="#8a92d8"><rect x="2" y="5" width="2" height="1"/><rect x="2" y="7" width="2" height="1"/><rect x="2" y="9" width="2" height="1"/><rect x="2" y="11" width="2" height="1"/><rect x="6" y="5" width="2" height="1"/><rect x="6" y="7" width="2" height="1"/><rect x="6" y="9" width="2" height="1"/><rect x="6" y="11" width="2" height="1"/><rect x="10" y="5" width="2" height="1"/><rect x="10" y="7" width="2" height="1"/><rect x="10" y="9" width="2" height="1"/><rect x="10" y="11" width="2" height="1"/></g></svg>
<div class="t" style="left:94px;top:305px;line-height:18px;letter-spacing:-0.18px">Person.BusinessEntityAdd</div>
<svg style="position:absolute;left:74px;top:324px" width="14" height="14" viewBox="0 0 14 14"><rect x="0.5" y="0.5" width="13" height="13" fill="#f8f8fe" stroke="#4a68c0"/><path d="M0.5 13.5 H13.5 V0.5" fill="none" stroke="#28388a"/><rect x="1" y="1" width="12" height="3" fill="#6a94e4"/><rect x="1" y="2" width="12" height="1" fill="#a6c2f2"/><g fill="#8a92d8"><rect x="2" y="5" width="2" height="1"/><rect x="2" y="7" width="2" height="1"/><rect x="2" y="9" width="2" height="1"/><rect x="2" y="11" width="2" height="1"/><rect x="6" y="5" width="2" height="1"/><rect x="6" y="7" width="2" height="1"/><rect x="6" y="9" width="2" height="1"/><rect x="6" y="11" width="2" height="1"/><rect x="10" y="5" width="2" height="1"/><rect x="10" y="7" width="2" height="1"/><rect x="10" y="9" width="2" height="1"/><rect x="10" y="11" width="2" height="1"/></g></svg>
<div class="t" style="left:94px;top:322px;line-height:18px;letter-spacing:-0.18px">Person.BusinessEntityCon</div>
<svg style="position:absolute;left:74px;top:341px" width="14" height="14" viewBox="0 0 14 14"><rect x="0.5" y="0.5" width="13" height="13" fill="#f8f8fe" stroke="#4a68c0"/><path d="M0.5 13.5 H13.5 V0.5" fill="none" stroke="#28388a"/><rect x="1" y="1" width="12" height="3" fill="#6a94e4"/><rect x="1" y="2" width="12" height="1" fill="#a6c2f2"/><g fill="#8a92d8"><rect x="2" y="5" width="2" height="1"/><rect x="2" y="7" width="2" height="1"/><rect x="2" y="9" width="2" height="1"/><rect x="2" y="11" width="2" height="1"/><rect x="6" y="5" width="2" height="1"/><rect x="6" y="7" width="2" height="1"/><rect x="6" y="9" width="2" height="1"/><rect x="6" y="11" width="2" height="1"/><rect x="10" y="5" width="2" height="1"/><rect x="10" y="7" width="2" height="1"/><rect x="10" y="9" width="2" height="1"/><rect x="10" y="11" width="2" height="1"/></g></svg>
<div class="t" style="left:94px;top:339px;line-height:18px;letter-spacing:-0.18px">Person.ContactType</div>
<svg style="position:absolute;left:74px;top:358px" width="14" height="14" viewBox="0 0 14 14"><rect x="0.5" y="0.5" width="13" height="13" fill="#f8f8fe" stroke="#4a68c0"/><path d="M0.5 13.5 H13.5 V0.5" fill="none" stroke="#28388a"/><rect x="1" y="1" width="12" height="3" fill="#6a94e4"/><rect x="1" y="2" width="12" height="1" fill="#a6c2f2"/><g fill="#8a92d8"><rect x="2" y="5" width="2" height="1"/><rect x="2" y="7" width="2" height="1"/><rect x="2" y="9" width="2" height="1"/><rect x="2" y="11" width="2" height="1"/><rect x="6" y="5" width="2" height="1"/><rect x="6" y="7" width="2" height="1"/><rect x="6" y="9" width="2" height="1"/><rect x="6" y="11" width="2" height="1"/><rect x="10" y="5" width="2" height="1"/><rect x="10" y="7" width="2" height="1"/><rect x="10" y="9" width="2" height="1"/><rect x="10" y="11" width="2" height="1"/></g></svg>
<div class="t" style="left:94px;top:356px;line-height:18px;letter-spacing:-0.18px">Person.CountryRegion</div>
<svg style="position:absolute;left:74px;top:375px" width="14" height="14" viewBox="0 0 14 14"><rect x="0.5" y="0.5" width="13" height="13" fill="#f8f8fe" stroke="#4a68c0"/><path d="M0.5 13.5 H13.5 V0.5" fill="none" stroke="#28388a"/><rect x="1" y="1" width="12" height="3" fill="#6a94e4"/><rect x="1" y="2" width="12" height="1" fill="#a6c2f2"/><g fill="#8a92d8"><rect x="2" y="5" width="2" height="1"/><rect x="2" y="7" width="2" height="1"/><rect x="2" y="9" width="2" height="1"/><rect x="2" y="11" width="2" height="1"/><rect x="6" y="5" width="2" height="1"/><rect x="6" y="7" width="2" height="1"/><rect x="6" y="9" width="2" height="1"/><rect x="6" y="11" width="2" height="1"/><rect x="10" y="5" width="2" height="1"/><rect x="10" y="7" width="2" height="1"/><rect x="10" y="9" width="2" height="1"/><rect x="10" y="11" width="2" height="1"/></g></svg>
<div class="t" style="left:94px;top:373px;line-height:18px;letter-spacing:-0.18px">Person.EmailAddress</div>
<svg style="position:absolute;left:74px;top:392px" width="14" height="14" viewBox="0 0 14 14"><rect x="0.5" y="0.5" width="13" height="13" fill="#f8f8fe" stroke="#4a68c0"/><path d="M0.5 13.5 H13.5 V0.5" fill="none" stroke="#28388a"/><rect x="1" y="1" width="12" height="3" fill="#6a94e4"/><rect x="1" y="2" width="12" height="1" fill="#a6c2f2"/><g fill="#8a92d8"><rect x="2" y="5" width="2" height="1"/><rect x="2" y="7" width="2" height="1"/><rect x="2" y="9" width="2" height="1"/><rect x="2" y="11" width="2" height="1"/><rect x="6" y="5" width="2" height="1"/><rect x="6" y="7" width="2" height="1"/><rect x="6" y="9" width="2" height="1"/><rect x="6" y="11" width="2" height="1"/><rect x="10" y="5" width="2" height="1"/><rect x="10" y="7" width="2" height="1"/><rect x="10" y="9" width="2" height="1"/><rect x="10" y="11" width="2" height="1"/></g></svg>
<div class="t" style="left:94px;top:390px;line-height:18px;letter-spacing:-0.18px">Person.Password</div>
<svg style="position:absolute;left:74px;top:409px" width="14" height="14" viewBox="0 0 14 14"><rect x="0.5" y="0.5" width="13" height="13" fill="#f8f8fe" stroke="#4a68c0"/><path d="M0.5 13.5 H13.5 V0.5" fill="none" stroke="#28388a"/><rect x="1" y="1" width="12" height="3" fill="#6a94e4"/><rect x="1" y="2" width="12" height="1" fill="#a6c2f2"/><g fill="#8a92d8"><rect x="2" y="5" width="2" height="1"/><rect x="2" y="7" width="2" height="1"/><rect x="2" y="9" width="2" height="1"/><rect x="2" y="11" width="2" height="1"/><rect x="6" y="5" width="2" height="1"/><rect x="6" y="7" width="2" height="1"/><rect x="6" y="9" width="2" height="1"/><rect x="6" y="11" width="2" height="1"/><rect x="10" y="5" width="2" height="1"/><rect x="10" y="7" width="2" height="1"/><rect x="10" y="9" width="2" height="1"/><rect x="10" y="11" width="2" height="1"/></g></svg>
<div class="t" style="left:94px;top:407px;line-height:18px;letter-spacing:-0.18px">Person.Person</div>
<svg style="position:absolute;left:74px;top:426px" width="14" height="14" viewBox="0 0 14 14"><rect x="0.5" y="0.5" width="13" height="13" fill="#f8f8fe" stroke="#4a68c0"/><path d="M0.5 13.5 H13.5 V0.5" fill="none" stroke="#28388a"/><rect x="1" y="1" width="12" height="3" fill="#6a94e4"/><rect x="1" y="2" width="12" height="1" fill="#a6c2f2"/><g fill="#8a92d8"><rect x="2" y="5" width="2" height="1"/><rect x="2" y="7" width="2" height="1"/><rect x="2" y="9" width="2" height="1"/><rect x="2" y="11" width="2" height="1"/><rect x="6" y="5" width="2" height="1"/><rect x="6" y="7" width="2" height="1"/><rect x="6" y="9" width="2" height="1"/><rect x="6" y="11" width="2" height="1"/><rect x="10" y="5" width="2" height="1"/><rect x="10" y="7" width="2" height="1"/><rect x="10" y="9" width="2" height="1"/><rect x="10" y="11" width="2" height="1"/></g></svg>
<div class="t" style="left:94px;top:424px;line-height:18px;letter-spacing:-0.18px">Person.PersonPhone</div>
<svg style="position:absolute;left:74px;top:443px" width="14" height="14" viewBox="0 0 14 14"><rect x="0.5" y="0.5" width="13" height="13" fill="#f8f8fe" stroke="#4a68c0"/><path d="M0.5 13.5 H13.5 V0.5" fill="none" stroke="#28388a"/><rect x="1" y="1" width="12" height="3" fill="#6a94e4"/><rect x="1" y="2" width="12" height="1" fill="#a6c2f2"/><g fill="#8a92d8"><rect x="2" y="5" width="2" height="1"/><rect x="2" y="7" width="2" height="1"/><rect x="2" y="9" width="2" height="1"/><rect x="2" y="11" width="2" height="1"/><rect x="6" y="5" width="2" height="1"/><rect x="6" y="7" width="2" height="1"/><rect x="6" y="9" width="2" height="1"/><rect x="6" y="11" width="2" height="1"/><rect x="10" y="5" width="2" height="1"/><rect x="10" y="7" width="2" height="1"/><rect x="10" y="9" width="2" height="1"/><rect x="10" y="11" width="2" height="1"/></g></svg>
<div class="t" style="left:94px;top:441px;line-height:18px;letter-spacing:-0.18px">Person.PhoneNumberType</div>
<svg style="position:absolute;left:74px;top:460px" width="14" height="14" viewBox="0 0 14 14"><rect x="0.5" y="0.5" width="13" height="13" fill="#f8f8fe" stroke="#4a68c0"/><path d="M0.5 13.5 H13.5 V0.5" fill="none" stroke="#28388a"/><rect x="1" y="1" width="12" height="3" fill="#6a94e4"/><rect x="1" y="2" width="12" height="1" fill="#a6c2f2"/><g fill="#8a92d8"><rect x="2" y="5" width="2" height="1"/><rect x="2" y="7" width="2" height="1"/><rect x="2" y="9" width="2" height="1"/><rect x="2" y="11" width="2" height="1"/><rect x="6" y="5" width="2" height="1"/><rect x="6" y="7" width="2" height="1"/><rect x="6" y="9" width="2" height="1"/><rect x="6" y="11" width="2" height="1"/><rect x="10" y="5" width="2" height="1"/><rect x="10" y="7" width="2" height="1"/><rect x="10" y="9" width="2" height="1"/><rect x="10" y="11" width="2" height="1"/></g></svg>
<div class="t" style="left:94px;top:458px;line-height:18px;letter-spacing:-0.18px">Person.StateProvince</div>
<svg style="position:absolute;left:74px;top:477px" width="14" height="14" viewBox="0 0 14 14"><rect x="0.5" y="0.5" width="13" height="13" fill="#f8f8fe" stroke="#4a68c0"/><path d="M0.5 13.5 H13.5 V0.5" fill="none" stroke="#28388a"/><rect x="1" y="1" width="12" height="3" fill="#6a94e4"/><rect x="1" y="2" width="12" height="1" fill="#a6c2f2"/><g fill="#8a92d8"><rect x="2" y="5" width="2" height="1"/><rect x="2" y="7" width="2" height="1"/><rect x="2" y="9" width="2" height="1"/><rect x="2" y="11" width="2" height="1"/><rect x="6" y="5" width="2" height="1"/><rect x="6" y="7" width="2" height="1"/><rect x="6" y="9" width="2" height="1"/><rect x="6" y="11" width="2" height="1"/><rect x="10" y="5" width="2" height="1"/><rect x="10" y="7" width="2" height="1"/><rect x="10" y="9" width="2" height="1"/><rect x="10" y="11" width="2" height="1"/></g></svg>
<div class="t" style="left:94px;top:475px;line-height:18px;letter-spacing:-0.18px">Production.BillOfMaterials</div>
<svg style="position:absolute;left:74px;top:494px" width="14" height="14" viewBox="0 0 14 14"><rect x="0.5" y="0.5" width="13" height="13" fill="#f8f8fe" stroke="#4a68c0"/><path d="M0.5 13.5 H13.5 V0.5" fill="none" stroke="#28388a"/><rect x="1" y="1" width="12" height="3" fill="#6a94e4"/><rect x="1" y="2" width="12" height="1" fill="#a6c2f2"/><g fill="#8a92d8"><rect x="2" y="5" width="2" height="1"/><rect x="2" y="7" width="2" height="1"/><rect x="2" y="9" width="2" height="1"/><rect x="2" y="11" width="2" height="1"/><rect x="6" y="5" width="2" height="1"/><rect x="6" y="7" width="2" height="1"/><rect x="6" y="9" width="2" height="1"/><rect x="6" y="11" width="2" height="1"/><rect x="10" y="5" width="2" height="1"/><rect x="10" y="7" width="2" height="1"/><rect x="10" y="9" width="2" height="1"/><rect x="10" y="11" width="2" height="1"/></g></svg>
<div class="t" style="left:94px;top:492px;line-height:18px;letter-spacing:-0.18px">Production.Culture</div>
<svg style="position:absolute;left:74px;top:511px" width="14" height="14" viewBox="0 0 14 14"><rect x="0.5" y="0.5" width="13" height="13" fill="#f8f8fe" stroke="#4a68c0"/><path d="M0.5 13.5 H13.5 V0.5" fill="none" stroke="#28388a"/><rect x="1" y="1" width="12" height="3" fill="#6a94e4"/><rect x="1" y="2" width="12" height="1" fill="#a6c2f2"/><g fill="#8a92d8"><rect x="2" y="5" width="2" height="1"/><rect x="2" y="7" width="2" height="1"/><rect x="2" y="9" width="2" height="1"/><rect x="2" y="11" width="2" height="1"/><rect x="6" y="5" width="2" height="1"/><rect x="6" y="7" width="2" height="1"/><rect x="6" y="9" width="2" height="1"/><rect x="6" y="11" width="2" height="1"/><rect x="10" y="5" width="2" height="1"/><rect x="10" y="7" width="2" height="1"/><rect x="10" y="9" width="2" height="1"/><rect x="10" y="11" width="2" height="1"/></g></svg>
<div class="t" style="left:94px;top:509px;line-height:18px;letter-spacing:-0.18px">Production.Document</div>
<svg style="position:absolute;left:74px;top:528px" width="14" height="14" viewBox="0 0 14 14"><rect x="0.5" y="0.5" width="13" height="13" fill="#f8f8fe" stroke="#4a68c0"/><path d="M0.5 13.5 H13.5 V0.5" fill="none" stroke="#28388a"/><rect x="1" y="1" width="12" height="3" fill="#6a94e4"/><rect x="1" y="2" width="12" height="1" fill="#a6c2f2"/><g fill="#8a92d8"><rect x="2" y="5" width="2" height="1"/><rect x="2" y="7" width="2" height="1"/><rect x="2" y="9" width="2" height="1"/><rect x="2" y="11" width="2" height="1"/><rect x="6" y="5" width="2" height="1"/><rect x="6" y="7" width="2" height="1"/><rect x="6" y="9" width="2" height="1"/><rect x="6" y="11" width="2" height="1"/><rect x="10" y="5" width="2" height="1"/><rect x="10" y="7" width="2" height="1"/><rect x="10" y="9" width="2" height="1"/><rect x="10" y="11" width="2" height="1"/></g></svg>
<div class="t" style="left:94px;top:526px;line-height:18px;letter-spacing:-0.18px">Production.Illustration</div>
<svg style="position:absolute;left:74px;top:545px" width="14" height="14" viewBox="0 0 14 14"><rect x="0.5" y="0.5" width="13" height="13" fill="#f8f8fe" stroke="#4a68c0"/><path d="M0.5 13.5 H13.5 V0.5" fill="none" stroke="#28388a"/><rect x="1" y="1" width="12" height="3" fill="#6a94e4"/><rect x="1" y="2" width="12" height="1" fill="#a6c2f2"/><g fill="#8a92d8"><rect x="2" y="5" width="2" height="1"/><rect x="2" y="7" width="2" height="1"/><rect x="2" y="9" width="2" height="1"/><rect x="2" y="11" width="2" height="1"/><rect x="6" y="5" width="2" height="1"/><rect x="6" y="7" width="2" height="1"/><rect x="6" y="9" width="2" height="1"/><rect x="6" y="11" width="2" height="1"/><rect x="10" y="5" width="2" height="1"/><rect x="10" y="7" width="2" height="1"/><rect x="10" y="9" width="2" height="1"/><rect x="10" y="11" width="2" height="1"/></g></svg>
<div class="t" style="left:94px;top:543px;line-height:18px;letter-spacing:-0.18px">Production.Location</div>
<svg style="position:absolute;left:74px;top:562px" width="14" height="14" viewBox="0 0 14 14"><rect x="0.5" y="0.5" width="13" height="13" fill="#f8f8fe" stroke="#4a68c0"/><path d="M0.5 13.5 H13.5 V0.5" fill="none" stroke="#28388a"/><rect x="1" y="1" width="12" height="3" fill="#6a94e4"/><rect x="1" y="2" width="12" height="1" fill="#a6c2f2"/><g fill="#8a92d8"><rect x="2" y="5" width="2" height="1"/><rect x="2" y="7" width="2" height="1"/><rect x="2" y="9" width="2" height="1"/><rect x="2" y="11" width="2" height="1"/><rect x="6" y="5" width="2" height="1"/><rect x="6" y="7" width="2" height="1"/><rect x="6" y="9" width="2" height="1"/><rect x="6" y="11" width="2" height="1"/><rect x="10" y="5" width="2" height="1"/><rect x="10" y="7" width="2" height="1"/><rect x="10" y="9" width="2" height="1"/><rect x="10" y="11" width="2" height="1"/></g></svg>
<div class="t" style="left:94px;top:560px;line-height:18px;letter-spacing:-0.18px">Production.Product</div>
<svg style="position:absolute;left:74px;top:579px" width="14" height="14" viewBox="0 0 14 14"><rect x="0.5" y="0.5" width="13" height="13" fill="#f8f8fe" stroke="#4a68c0"/><path d="M0.5 13.5 H13.5 V0.5" fill="none" stroke="#28388a"/><rect x="1" y="1" width="12" height="3" fill="#6a94e4"/><rect x="1" y="2" width="12" height="1" fill="#a6c2f2"/><g fill="#8a92d8"><rect x="2" y="5" width="2" height="1"/><rect x="2" y="7" width="2" height="1"/><rect x="2" y="9" width="2" height="1"/><rect x="2" y="11" width="2" height="1"/><rect x="6" y="5" width="2" height="1"/><rect x="6" y="7" width="2" height="1"/><rect x="6" y="9" width="2" height="1"/><rect x="6" y="11" width="2" height="1"/><rect x="10" y="5" width="2" height="1"/><rect x="10" y="7" width="2" height="1"/><rect x="10" y="9" width="2" height="1"/><rect x="10" y="11" width="2" height="1"/></g></svg>
<div class="t" style="left:94px;top:577px;line-height:18px;letter-spacing:-0.18px">Production.ProductCategory</div>
</div>
<div style="position:absolute;left:285px;top:124px;width:17px;height:581px;background:#f3f3f6"></div>
<svg style="position:absolute;left:290px;top:130px" width="8" height="5" viewBox="0 0 8 5"><path d="M0 4.5 L4 0.5 L8 4.5 Z" fill="#7b8394"/></svg>
<div style="position:absolute;left:290px;top:141px;width:7px;height:99px;background:#d9d9dc;border-radius:4px"></div>
<svg style="position:absolute;left:290px;top:695px" width="8" height="5" viewBox="0 0 8 5"><path d="M0 0.5 H8 L4 4.5 Z" fill="#7b8394"/></svg>
<div style="position:absolute;left:302px;top:103px;width:1px;height:603px;background:#8a95a6"></div>
<div style="position:absolute;left:302px;top:56px;width:4px;height:47px;background:#dee8f1"></div>
<div style="position:absolute;left:303px;top:56px;width:3px;height:650px;background:#eef2f6"></div>
<div style="position:absolute;left:306px;top:56px;width:895px;height:650px;background:#fff"></div>
<div style="position:absolute;left:306px;top:56px;width:895px;height:1px;background:#8a95a6"></div>
<div style="position:absolute;left:306px;top:56px;width:1px;height:650px;background:#8a95a6"></div>
<div style="position:absolute;left:1200px;top:57px;width:1px;height:649px;background:#c5cad5"></div>
<div style="position:absolute;left:307px;top:57px;width:893px;height:20px;background:linear-gradient(#f3f5f7 0%,#e9ecf0 25%,#e3e6ed 50%,#dadee7 50%,#dadee7 90%,#dfe2ea 100%)"></div>
<div style="position:absolute;left:307px;top:77px;width:893px;height:1px;background:#bcc3d0"></div>
<div style="position:absolute;left:322px;top:57px;width:1px;height:20px;background:#c5cad5"></div>
<div style="position:absolute;left:572px;top:57px;width:1px;height:20px;background:#c5cad5"></div>
<div class="t" style="left:326px;top:57px;width:247px;overflow:hidden;letter-spacing:-0.22px;color:#3f4d6b">Name</div>
<div style="position:absolute;left:631px;top:57px;width:1px;height:20px;background:#c5cad5"></div>
<div class="t" style="left:576px;top:57px;width:56px;overflow:hidden;letter-spacing:-0.22px;color:#3f4d6b">Columns</div>
<div style="position:absolute;left:743px;top:57px;width:1px;height:20px;background:#c5cad5"></div>
<div class="t" style="left:635px;top:57px;width:109px;overflow:hidden;letter-spacing:-0.22px;color:#3f4d6b">Creation Date</div>
<div style="position:absolute;left:826px;top:57px;width:1px;height:20px;background:#c5cad5"></div>
<div class="t" style="left:747px;top:57px;width:80px;overflow:hidden;letter-spacing:-0.22px;color:#3f4d6b">Last Updated</div>
<div style="position:absolute;left:936px;top:57px;width:1px;height:20px;background:#c5cad5"></div>
<div class="t" style="left:830px;top:57px;width:107px;overflow:hidden;letter-spacing:-0.22px;color:#3f4d6b">Modification Date</div>
<div style="position:absolute;left:1188px;top:57px;width:1px;height:20px;background:#c5cad5"></div>
<div class="t" style="left:940px;top:57px;width:249px;overflow:hidden;letter-spacing:-0.22px;color:#3f4d6b">MS_Description</div>

<div class="t" style="left:1192px;top:57px;width:9px;overflow:hidden;letter-spacing:-0.22px;color:#3f4d6b">Rows</div>
<div style="position:absolute;left:307px;top:78px;width:15px;height:609px;background:#e0e4eb"></div>
<div style="position:absolute;left:322px;top:57px;width:1px;height:630px;background:#b5bfcc"></div>
<div style="position:absolute;left:307px;top:98px;width:880px;height:1px;background:#dfe3ea"></div>
<div style="position:absolute;left:307px;top:98px;width:15px;height:1px;background:#c3cad6"></div>
<div style="position:absolute;left:572px;top:78px;width:1px;height:20px;background:#dfe3ea"></div>
<div style="position:absolute;left:631px;top:78px;width:1px;height:20px;background:#dfe3ea"></div>
<div style="position:absolute;left:743px;top:78px;width:1px;height:20px;background:#dfe3ea"></div>
<div style="position:absolute;left:826px;top:78px;width:1px;height:20px;background:#dfe3ea"></div>
<div style="position:absolute;left:936px;top:78px;width:1px;height:20px;background:#dfe3ea"></div>
<div style="position:absolute;left:1188px;top:78px;width:1px;height:20px;background:#dfe3ea"></div>
<div class="t" style="left:326px;top:78px;width:245px;overflow:hidden;letter-spacing:-0.18px;">dbo.AWBuildVersion</div>
<div class="t" style="left:572px;top:78px;width:56px;text-align:right">4</div>
<div class="t" style="left:636px;top:78px;letter-spacing:0.15px">11.06.2018 13:42:59</div>
<div class="t" style="left:748px;top:78px;">{null}</div>
<div class="t" style="left:831px;top:78px;letter-spacing:0.15px">11.06.2018 13:43:14</div>
<div class="t" style="left:942px;top:78px;width:244px;overflow:hidden">Current version number of the AdventureWorks...</div>
<div style="position:absolute;left:307px;top:119px;width:880px;height:1px;background:#dfe3ea"></div>
<div style="position:absolute;left:307px;top:119px;width:15px;height:1px;background:#c3cad6"></div>
<div style="position:absolute;left:572px;top:99px;width:1px;height:20px;background:#dfe3ea"></div>
<div style="position:absolute;left:631px;top:99px;width:1px;height:20px;background:#dfe3ea"></div>
<div style="position:absolute;left:743px;top:99px;width:1px;height:20px;background:#dfe3ea"></div>
<div style="position:absolute;left:826px;top:99px;width:1px;height:20px;background:#dfe3ea"></div>
<div style="position:absolute;left:936px;top:99px;width:1px;height:20px;background:#dfe3ea"></div>
<div style="position:absolute;left:1188px;top:99px;width:1px;height:20px;background:#dfe3ea"></div>
<div class="t" style="left:326px;top:99px;width:245px;overflow:hidden;letter-spacing:-0.18px;">dbo.DatabaseLog</div>
<div class="t" style="left:572px;top:99px;width:56px;text-align:right">8</div>
<div class="t" style="left:636px;top:99px;letter-spacing:0.15px">11.06.2018 13:42:51</div>
<div class="t" style="left:748px;top:99px;">{null}</div>
<div class="t" style="left:831px;top:99px;letter-spacing:0.15px">11.06.2018 13:43:16</div>
<div class="t" style="left:942px;top:99px;width:244px;overflow:hidden">Audit table tracking all DDL changes made to th...</div>
<div style="position:absolute;left:307px;top:140px;width:880px;height:1px;background:#dfe3ea"></div>
<div style="position:absolute;left:307px;top:140px;width:15px;height:1px;background:#c3cad6"></div>
<div style="position:absolute;left:572px;top:120px;width:1px;height:20px;background:#dfe3ea"></div>
<div style="position:absolute;left:631px;top:120px;width:1px;height:20px;background:#dfe3ea"></div>
<div style="position:absolute;left:743px;top:120px;width:1px;height:20px;background:#dfe3ea"></div>
<div style="position:absolute;left:826px;top:120px;width:1px;height:20px;background:#dfe3ea"></div>
<div style="position:absolute;left:936px;top:120px;width:1px;height:20px;background:#dfe3ea"></div>
<div style="position:absolute;left:1188px;top:120px;width:1px;height:20px;background:#dfe3ea"></div>
<div class="t" style="left:326px;top:120px;width:245px;overflow:hidden;letter-spacing:-0.18px;">dbo.dataedo_interfacing_tables</div>
<div class="t" style="left:572px;top:120px;width:56px;text-align:right">8</div>
<div class="t" style="left:636px;top:120px;letter-spacing:0.15px">30.11.2018 17:57:21</div>
<div class="t" style="left:748px;top:120px;">{null}</div>
<div class="t" style="left:831px;top:120px;letter-spacing:0.15px">30.11.2018 17:57:21</div>
<div class="t" style="left:942px;top:120px;width:244px;overflow:hidden">{null}</div>
<div style="position:absolute;left:307px;top:161px;width:880px;height:1px;background:#dfe3ea"></div>
<div style="position:absolute;left:307px;top:161px;width:15px;height:1px;background:#c3cad6"></div>
<div style="position:absolute;left:572px;top:141px;width:1px;height:20px;background:#dfe3ea"></div>
<div style="position:absolute;left:631px;top:141px;width:1px;height:20px;background:#dfe3ea"></div>
<div style="position:absolute;left:743px;top:141px;width:1px;height:20px;background:#dfe3ea"></div>
<div style="position:absolute;left:826px;top:141px;width:1px;height:20px;background:#dfe3ea"></div>
<div style="position:absolute;left:936px;top:141px;width:1px;height:20px;background:#dfe3ea"></div>
<div style="position:absolute;left:1188px;top:141px;width:1px;height:20px;background:#dfe3ea"></div>
<div class="t" style="left:326px;top:141px;width:245px;overflow:hidden;letter-spacing:-0.18px;">dbo.ErrorLog</div>
<div class="t" style="left:572px;top:141px;width:56px;text-align:right">9</div>
<div class="t" style="left:636px;top:141px;letter-spacing:0.15px">11.06.2018 13:42:53</div>
<div class="t" style="left:748px;top:141px;">{null}</div>
<div class="t" style="left:831px;top:141px;letter-spacing:0.15px">11.06.2018 13:42:55</div>
<div class="t" style="left:942px;top:141px;width:244px;overflow:hidden">Audit table tracking errors in the the Adventure...</div>
<div style="position:absolute;left:307px;top:182px;width:880px;height:1px;background:#dfe3ea"></div>
<div style="position:absolute;left:307px;top:182px;width:15px;height:1px;background:#c3cad6"></div>
<div style="position:absolute;left:572px;top:162px;width:1px;height:20px;background:#dfe3ea"></div>
<div style="position:absolute;left:631px;top:162px;width:1px;height:20px;background:#dfe3ea"></div>
<div style="position:absolute;left:743px;top:162px;width:1px;height:20px;background:#dfe3ea"></div>
<div style="position:absolute;left:826px;top:162px;width:1px;height:20px;background:#dfe3ea"></div>
<div style="position:absolute;left:936px;top:162px;width:1px;height:20px;background:#dfe3ea"></div>
<div style="position:absolute;left:1188px;top:162px;width:1px;height:20px;background:#dfe3ea"></div>
<div class="t" style="left:326px;top:162px;width:245px;overflow:hidden;letter-spacing:-0.18px;">dbo.sysdiagrams</div>
<div class="t" style="left:572px;top:162px;width:56px;text-align:right">5</div>
<div class="t" style="left:636px;top:162px;letter-spacing:0.15px">09.10.2018 12:32:03</div>
<div class="t" style="left:748px;top:162px;">{null}</div>
<div class="t" style="left:831px;top:162px;letter-spacing:0.15px">09.10.2018 12:32:03</div>
<div class="t" style="left:942px;top:162px;width:244px;overflow:hidden">{null}</div>
<div style="position:absolute;left:307px;top:203px;width:880px;height:1px;background:#dfe3ea"></div>
<div style="position:absolute;left:307px;top:203px;width:15px;height:1px;background:#c3cad6"></div>
<div style="position:absolute;left:572px;top:183px;width:1px;height:20px;background:#dfe3ea"></div>
<div style="position:absolute;left:631px;top:183px;width:1px;height:20px;background:#dfe3ea"></div>
<div style="position:absolute;left:743px;top:183px;width:1px;height:20px;background:#dfe3ea"></div>
<div style="position:absolute;left:826px;top:183px;width:1px;height:20px;background:#dfe3ea"></div>
<div style="position:absolute;left:936px;top:183px;width:1px;height:20px;background:#dfe3ea"></div>
<div style="position:absolute;left:1188px;top:183px;width:1px;height:20px;background:#dfe3ea"></div>
<div class="t" style="left:326px;top:183px;width:245px;overflow:hidden;letter-spacing:-0.18px;">HumanResources.Department</div>
<div class="t" style="left:572px;top:183px;width:56px;text-align:right">4</div>
<div class="t" style="left:636px;top:183px;letter-spacing:0.15px">11.06.2018 13:42:59</div>
<div class="t" style="left:748px;top:183px;">{null}</div>
<div class="t" style="left:831px;top:183px;letter-spacing:0.15px">11.06.2018 13:43:18</div>
<div class="t" style="left:942px;top:183px;width:244px;overflow:hidden">Lookup table containing the departments within ...</div>
<div style="position:absolute;left:307px;top:224px;width:880px;height:1px;background:#dfe3ea"></div>
<div style="position:absolute;left:307px;top:224px;width:15px;height:1px;background:#c3cad6"></div>
<div style="position:absolute;left:572px;top:204px;width:1px;height:20px;background:#dfe3ea"></div>
<div style="position:absolute;left:631px;top:204px;width:1px;height:20px;background:#dfe3ea"></div>
<div style="position:absolute;left:743px;top:204px;width:1px;height:20px;background:#dfe3ea"></div>
<div style="position:absolute;left:826px;top:204px;width:1px;height:20px;background:#dfe3ea"></div>
<div style="position:absolute;left:936px;top:204px;width:1px;height:20px;background:#dfe3ea"></div>
<div style="position:absolute;left:1188px;top:204px;width:1px;height:20px;background:#dfe3ea"></div>
<div style="position:absolute;left:322px;top:204px;width:250px;height:20px;background:#6b97c9;outline:1px dotted #fff;outline-offset:-1px"></div>
<svg style="position:absolute;left:313px;top:211px" width="5" height="8" viewBox="0 0 5 8"><path d="M0 0 L4 3.5 L0 7 Z" fill="#1a2438"/></svg>
<div class="t" style="left:326px;top:204px;width:245px;overflow:hidden;letter-spacing:-0.18px;color:#fff">HumanResources.Employee</div>
<div class="t" style="left:572px;top:204px;width:56px;text-align:right">16</div>
<div class="t" style="left:636px;top:204px;letter-spacing:0.15px">11.06.2018 13:43:11</div>
<div class="t" style="left:748px;top:204px;">{null}</div>
<div class="t" style="left:831px;top:204px;letter-spacing:0.15px">11.06.2018 13:43:19</div>
<div class="t" style="left:942px;top:204px;width:244px;overflow:hidden">Employee information such as salary, departme...</div>
<div style="position:absolute;left:307px;top:245px;width:880px;height:1px;background:#dfe3ea"></div>
<div style="position:absolute;left:307px;top:245px;width:15px;height:1px;background:#c3cad6"></div>
<div style="position:absolute;left:572px;top:225px;width:1px;height:20px;background:#dfe3ea"></div>
<div style="position:absolute;left:631px;top:225px;width:1px;height:20px;background:#dfe3ea"></div>
<div style="position:absolute;left:743px;top:225px;width:1px;height:20px;background:#dfe3ea"></div>
<div style="position:absolute;left:826px;top:225px;width:1px;height:20px;background:#dfe3ea"></div>
<div style="position:absolute;left:936px;top:225px;width:1px;height:20px;background:#dfe3ea"></div>
<div style="position:absolute;left:1188px;top:225px;width:1px;height:20px;background:#dfe3ea"></div>
<div class="t" style="left:326px;top:225px;width:245px;overflow:hidden;letter-spacing:-0.18px;">HumanResources.EmployeeDepartmentHistory</div>
<div class="t" style="left:572px;top:225px;width:56px;text-align:right">6</div>
<div class="t" style="left:636px;top:225px;letter-spacing:0.15px">11.06.2018 13:43:11</div>
<div class="t" style="left:748px;top:225px;">{null}</div>
<div class="t" style="left:831px;top:225px;letter-spacing:0.15px">11.06.2018 13:43:18</div>
<div class="t" style="left:942px;top:225px;width:244px;overflow:hidden">Employee department transfers.</div>
<div style="position:absolute;left:307px;top:266px;width:880px;height:1px;background:#dfe3ea"></div>
<div style="position:absolute;left:307px;top:266px;width:15px;height:1px;background:#c3cad6"></div>
<div style="position:absolute;left:572px;top:246px;width:1px;height:20px;background:#dfe3ea"></div>
<div style="position:absolute;left:631px;top:246px;width:1px;height:20px;background:#dfe3ea"></div>
<div style="position:absolute;left:743px;top:246px;width:1px;height:20px;background:#dfe3ea"></div>
<div style="position:absolute;left:826px;top:246px;width:1px;height:20px;background:#dfe3ea"></div>
<div style="position:absolute;left:936px;top:246px;width:1px;height:20px;background:#dfe3ea"></div>
<div style="position:absolute;left:1188px;top:246px;width:1px;height:20px;background:#dfe3ea"></div>
<div class="t" style="left:326px;top:246px;width:245px;overflow:hidden;letter-spacing:-0.18px;">HumanResources.EmployeePayHistory</div>
<div class="t" style="left:572px;top:246px;width:56px;text-align:right">5</div>
<div class="t" style="left:636px;top:246px;letter-spacing:0.15px">11.06.2018 13:43:11</div>
<div class="t" style="left:748px;top:246px;">{null}</div>
<div class="t" style="left:831px;top:246px;letter-spacing:0.15px">11.06.2018 13:43:18</div>
<div class="t" style="left:942px;top:246px;width:244px;overflow:hidden">Employee pay history.</div>
<div style="position:absolute;left:307px;top:287px;width:880px;height:1px;background:#dfe3ea"></div>
<div style="position:absolute;left:307px;top:287px;width:15px;height:1px;background:#c3cad6"></div>
<div style="position:absolute;left:572px;top:267px;width:1px;height:20px;background:#dfe3ea"></div>
<div style="position:absolute;left:631px;top:267px;width:1px;height:20px;background:#dfe3ea"></div>
<div style="position:absolute;left:743px;top:267px;width:1px;height:20px;background:#dfe3ea"></div>
<div style="position:absolute;left:826px;top:267px;width:1px;height:20px;background:#dfe3ea"></div>
<div style="position:absolute;left:936px;top:267px;width:1px;height:20px;background:#dfe3ea"></div>
<div style="position:absolute;left:1188px;top:267px;width:1px;height:20px;background:#dfe3ea"></div>
<div class="t" style="left:326px;top:267px;width:245px;overflow:hidden;letter-spacing:-0.18px;">HumanResources.JobCandidate</div>
<div class="t" style="left:572px;top:267px;width:56px;text-align:right">4</div>
<div class="t" style="left:636px;top:267px;letter-spacing:0.15px">11.06.2018 13:43:11</div>
<div class="t" style="left:748px;top:267px;">{null}</div>
<div class="t" style="left:831px;top:267px;letter-spacing:0.15px">11.06.2018 13:43:18</div>
<div class="t" style="left:942px;top:267px;width:244px;overflow:hidden">R&eacute;sum&eacute;s submitted to Human Resources by job...</div>
<div style="position:absolute;left:307px;top:308px;width:880px;height:1px;background:#dfe3ea"></div>
<div style="position:absolute;left:307px;top:308px;width:15px;height:1px;background:#c3cad6"></div>
<div style="position:absolute;left:572px;top:288px;width:1px;height:20px;background:#dfe3ea"></div>
<div style="position:absolute;left:631px;top:288px;width:1px;height:20px;background:#dfe3ea"></div>
<div style="position:absolute;left:743px;top:288px;width:1px;height:20px;background:#dfe3ea"></div>
<div style="position:absolute;left:826px;top:288px;width:1px;height:20px;background:#dfe3ea"></div>
<div style="position:absolute;left:936px;top:288px;width:1px;height:20px;background:#dfe3ea"></div>
<div style="position:absolute;left:1188px;top:288px;width:1px;height:20px;background:#dfe3ea"></div>
<div class="t" style="left:326px;top:288px;width:245px;overflow:hidden;letter-spacing:-0.18px;">HumanResources.Shift</div>
<div class="t" style="left:572px;top:288px;width:56px;text-align:right">5</div>
<div class="t" style="left:636px;top:288px;letter-spacing:0.15px">11.06.2018 13:43:12</div>
<div class="t" style="left:748px;top:288px;">{null}</div>
<div class="t" style="left:831px;top:288px;letter-spacing:0.15px">11.06.2018 13:43:18</div>
<div class="t" style="left:942px;top:288px;width:244px;overflow:hidden">Work shift lookup table.</div>
<div style="position:absolute;left:307px;top:329px;width:880px;height:1px;background:#dfe3ea"></div>
<div style="position:absolute;left:307px;top:329px;width:15px;height:1px;background:#c3cad6"></div>
<div style="position:absolute;left:572px;top:309px;width:1px;height:20px;background:#dfe3ea"></div>
<div style="position:absolute;left:631px;top:309px;width:1px;height:20px;background:#dfe3ea"></div>
<div style="position:absolute;left:743px;top:309px;width:1px;height:20px;background:#dfe3ea"></div>
<div style="position:absolute;left:826px;top:309px;width:1px;height:20px;background:#dfe3ea"></div>
<div style="position:absolute;left:936px;top:309px;width:1px;height:20px;background:#dfe3ea"></div>
<div style="position:absolute;left:1188px;top:309px;width:1px;height:20px;background:#dfe3ea"></div>
<div class="t" style="left:326px;top:309px;width:245px;overflow:hidden;letter-spacing:-0.18px;">Person.Address</div>
<div class="t" style="left:572px;top:309px;width:56px;text-align:right">9</div>
<div class="t" style="left:636px;top:309px;letter-spacing:0.15px">11.06.2018 13:42:59</div>
<div class="t" style="left:748px;top:309px;">{null}</div>
<div class="t" style="left:831px;top:309px;letter-spacing:0.15px">11.06.2018 13:43:19</div>
<div class="t" style="left:942px;top:309px;width:244px;overflow:hidden">Street address information for customers, empl...</div>
<div style="position:absolute;left:307px;top:350px;width:880px;height:1px;background:#dfe3ea"></div>
<div style="position:absolute;left:307px;top:350px;width:15px;height:1px;background:#c3cad6"></div>
<div style="position:absolute;left:572px;top:330px;width:1px;height:20px;background:#dfe3ea"></div>
<div style="position:absolute;left:631px;top:330px;width:1px;height:20px;background:#dfe3ea"></div>
<div style="position:absolute;left:743px;top:330px;width:1px;height:20px;background:#dfe3ea"></div>
<div style="position:absolute;left:826px;top:330px;width:1px;height:20px;background:#dfe3ea"></div>
<div style="position:absolute;left:936px;top:330px;width:1px;height:20px;background:#dfe3ea"></div>
<div style="position:absolute;left:1188px;top:330px;width:1px;height:20px;background:#dfe3ea"></div>
<div class="t" style="left:326px;top:330px;width:245px;overflow:hidden;letter-spacing:-0.18px;">Person.AddressType</div>
<div class="t" style="left:572px;top:330px;width:56px;text-align:right">4</div>
<div class="t" style="left:636px;top:330px;letter-spacing:0.15px">11.06.2018 13:42:59</div>
<div class="t" style="left:748px;top:330px;">{null}</div>
<div class="t" style="left:831px;top:330px;letter-spacing:0.15px">11.06.2018 13:43:18</div>
<div class="t" style="left:942px;top:330px;width:244px;overflow:hidden">Types of addresses stored in the Address table.</div>
<div style="position:absolute;left:307px;top:371px;width:880px;height:1px;background:#dfe3ea"></div>
<div style="position:absolute;left:307px;top:371px;width:15px;height:1px;background:#c3cad6"></div>
<div style="position:absolute;left:572px;top:351px;width:1px;height:20px;background:#dfe3ea"></div>
<div style="position:absolute;left:631px;top:351px;width:1px;height:20px;background:#dfe3ea"></div>
<div style="position:absolute;left:743px;top:351px;width:1px;height:20px;background:#dfe3ea"></div>
<div style="position:absolute;left:826px;top:351px;width:1px;height:20px;background:#dfe3ea"></div>
<div style="position:absolute;left:936px;top:351px;width:1px;height:20px;background:#dfe3ea"></div>
<div style="position:absolute;left:1188px;top:351px;width:1px;height:20px;background:#dfe3ea"></div>
<div class="t" style="left:326px;top:351px;width:245px;overflow:hidden;letter-spacing:-0.18px;">Person.BusinessEntity</div>
<div class="t" style="left:572px;top:351px;width:56px;text-align:right">3</div>
<div class="t" style="left:636px;top:351px;letter-spacing:0.15px">11.06.2018 13:42:59</div>
<div class="t" style="left:748px;top:351px;">{null}</div>
<div class="t" style="left:831px;top:351px;letter-spacing:0.15px">11.06.2018 13:43:19</div>
<div class="t" style="left:942px;top:351px;width:244px;overflow:hidden">Source of the ID that connects vendors, custo...</div>
<div style="position:absolute;left:307px;top:392px;width:880px;height:1px;background:#dfe3ea"></div>
<div style="position:absolute;left:307px;top:392px;width:15px;height:1px;background:#c3cad6"></div>
<div style="position:absolute;left:572px;top:372px;width:1px;height:20px;background:#dfe3ea"></div>
<div style="position:absolute;left:631px;top:372px;width:1px;height:20px;background:#dfe3ea"></div>
<div style="position:absolute;left:743px;top:372px;width:1px;height:20px;background:#dfe3ea"></div>
<div style="position:absolute;left:826px;top:372px;width:1px;height:20px;background:#dfe3ea"></div>
<div style="position:absolute;left:936px;top:372px;width:1px;height:20px;background:#dfe3ea"></div>
<div style="position:absolute;left:1188px;top:372px;width:1px;height:20px;background:#dfe3ea"></div>
<div class="t" style="left:326px;top:372px;width:245px;overflow:hidden;letter-spacing:-0.18px;">Person.BusinessEntityAddress</div>
<div class="t" style="left:572px;top:372px;width:56px;text-align:right">5</div>
<div class="t" style="left:636px;top:372px;letter-spacing:0.15px">11.06.2018 13:42:59</div>
<div class="t" style="left:748px;top:372px;">{null}</div>
<div class="t" style="left:831px;top:372px;letter-spacing:0.15px">11.06.2018 13:43:18</div>
<div class="t" style="left:942px;top:372px;width:244px;overflow:hidden">Cross-reference table mapping customers, ven...</div>
<div style="position:absolute;left:307px;top:413px;width:880px;height:1px;background:#dfe3ea"></div>
<div style="position:absolute;left:307px;top:413px;width:15px;height:1px;background:#c3cad6"></div>
<div style="position:absolute;left:572px;top:393px;width:1px;height:20px;background:#dfe3ea"></div>
<div style="position:absolute;left:631px;top:393px;width:1px;height:20px;background:#dfe3ea"></div>
<div style="position:absolute;left:743px;top:393px;width:1px;height:20px;background:#dfe3ea"></div>
<div style="position:absolute;left:826px;top:393px;width:1px;height:20px;background:#dfe3ea"></div>
<div style="position:absolute;left:936px;top:393px;width:1px;height:20px;background:#dfe3ea"></div>
<div style="position:absolute;left:1188px;top:393px;width:1px;height:20px;background:#dfe3ea"></div>
<div class="t" style="left:326px;top:393px;width:245px;overflow:hidden;letter-spacing:-0.18px;">Person.BusinessEntityContact</div>
<div class="t" style="left:572px;top:393px;width:56px;text-align:right">5</div>
<div class="t" style="left:636px;top:393px;letter-spacing:0.15px">11.06.2018 13:42:59</div>
<div class="t" style="left:748px;top:393px;">{null}</div>
<div class="t" style="left:831px;top:393px;letter-spacing:0.15px">11.06.2018 13:43:18</div>
<div class="t" style="left:942px;top:393px;width:244px;overflow:hidden">Cross-reference table mapping stores, vendors...</div>
<div style="position:absolute;left:307px;top:434px;width:880px;height:1px;background:#dfe3ea"></div>
<div style="position:absolute;left:307px;top:434px;width:15px;height:1px;background:#c3cad6"></div>
<div style="position:absolute;left:572px;top:414px;width:1px;height:20px;background:#dfe3ea"></div>
<div style="position:absolute;left:631px;top:414px;width:1px;height:20px;background:#dfe3ea"></div>
<div style="position:absolute;left:743px;top:414px;width:1px;height:20px;background:#dfe3ea"></div>
<div style="position:absolute;left:826px;top:414px;width:1px;height:20px;background:#dfe3ea"></div>
<div style="position:absolute;left:936px;top:414px;width:1px;height:20px;background:#dfe3ea"></div>
<div style="position:absolute;left:1188px;top:414px;width:1px;height:20px;background:#dfe3ea"></div>
<div class="t" style="left:326px;top:414px;width:245px;overflow:hidden;letter-spacing:-0.18px;">Person.ContactType</div>
<div class="t" style="left:572px;top:414px;width:56px;text-align:right">3</div>
<div class="t" style="left:636px;top:414px;letter-spacing:0.15px">11.06.2018 13:42:59</div>
<div class="t" style="left:748px;top:414px;">{null}</div>
<div class="t" style="left:831px;top:414px;letter-spacing:0.15px">11.06.2018 13:43:18</div>
<div class="t" style="left:942px;top:414px;width:244px;overflow:hidden">Lookup table containing the types of business e...</div>
<div style="position:absolute;left:307px;top:455px;width:880px;height:1px;background:#dfe3ea"></div>
<div style="position:absolute;left:307px;top:455px;width:15px;height:1px;background:#c3cad6"></div>
<div style="position:absolute;left:572px;top:435px;width:1px;height:20px;background:#dfe3ea"></div>
<div style="position:absolute;left:631px;top:435px;width:1px;height:20px;background:#dfe3ea"></div>
<div style="position:absolute;left:743px;top:435px;width:1px;height:20px;background:#dfe3ea"></div>
<div style="position:absolute;left:826px;top:435px;width:1px;height:20px;background:#dfe3ea"></div>
<div style="position:absolute;left:936px;top:435px;width:1px;height:20px;background:#dfe3ea"></div>
<div style="position:absolute;left:1188px;top:435px;width:1px;height:20px;background:#dfe3ea"></div>
<div class="t" style="left:326px;top:435px;width:245px;overflow:hidden;letter-spacing:-0.18px;">Person.CountryRegion</div>
<div class="t" style="left:572px;top:435px;width:56px;text-align:right">3</div>
<div class="t" style="left:636px;top:435px;letter-spacing:0.15px">11.06.2018 13:42:59</div>
<div class="t" style="left:748px;top:435px;">{null}</div>
<div class="t" style="left:831px;top:435px;letter-spacing:0.15px">11.06.2018 13:43:20</div>
<div class="t" style="left:942px;top:435px;width:244px;overflow:hidden">Lookup table containing the ISO standard codes...</div>
<div style="position:absolute;left:307px;top:476px;width:880px;height:1px;background:#dfe3ea"></div>
<div style="position:absolute;left:307px;top:476px;width:15px;height:1px;background:#c3cad6"></div>
<div style="position:absolute;left:572px;top:456px;width:1px;height:20px;background:#dfe3ea"></div>
<div style="position:absolute;left:631px;top:456px;width:1px;height:20px;background:#dfe3ea"></div>
<div style="position:absolute;left:743px;top:456px;width:1px;height:20px;background:#dfe3ea"></div>
<div style="position:absolute;left:826px;top:456px;width:1px;height:20px;background:#dfe3ea"></div>
<div style="position:absolute;left:936px;top:456px;width:1px;height:20px;background:#dfe3ea"></div>
<div style="position:absolute;left:1188px;top:456px;width:1px;height:20px;background:#dfe3ea"></div>
<div class="t" style="left:326px;top:456px;width:245px;overflow:hidden;letter-spacing:-0.18px;">Person.EmailAddress</div>
<div class="t" style="left:572px;top:456px;width:56px;text-align:right">5</div>
<div class="t" style="left:636px;top:456px;letter-spacing:0.15px">11.06.2018 13:43:11</div>
<div class="t" style="left:748px;top:456px;">{null}</div>
<div class="t" style="left:831px;top:456px;letter-spacing:0.15px">11.06.2018 13:43:18</div>
<div class="t" style="left:942px;top:456px;width:244px;overflow:hidden">Where to send a person email.</div>
<div style="position:absolute;left:307px;top:497px;width:880px;height:1px;background:#dfe3ea"></div>
<div style="position:absolute;left:307px;top:497px;width:15px;height:1px;background:#c3cad6"></div>
<div style="position:absolute;left:572px;top:477px;width:1px;height:20px;background:#dfe3ea"></div>
<div style="position:absolute;left:631px;top:477px;width:1px;height:20px;background:#dfe3ea"></div>
<div style="position:absolute;left:743px;top:477px;width:1px;height:20px;background:#dfe3ea"></div>
<div style="position:absolute;left:826px;top:477px;width:1px;height:20px;background:#dfe3ea"></div>
<div style="position:absolute;left:936px;top:477px;width:1px;height:20px;background:#dfe3ea"></div>
<div style="position:absolute;left:1188px;top:477px;width:1px;height:20px;background:#dfe3ea"></div>
<div class="t" style="left:326px;top:477px;width:245px;overflow:hidden;letter-spacing:-0.18px;">Person.Password</div>
<div class="t" style="left:572px;top:477px;width:56px;text-align:right">5</div>
<div class="t" style="left:636px;top:477px;letter-spacing:0.15px">11.06.2018 13:43:11</div>
<div class="t" style="left:748px;top:477px;">{null}</div>
<div class="t" style="left:831px;top:477px;letter-spacing:0.15px">11.06.2018 13:43:18</div>
<div class="t" style="left:942px;top:477px;width:244px;overflow:hidden">One way hashed authentication information</div>
<div style="position:absolute;left:307px;top:518px;width:880px;height:1px;background:#dfe3ea"></div>
<div style="position:absolute;left:307px;top:518px;width:15px;height:1px;background:#c3cad6"></div>
<div style="position:absolute;left:572px;top:498px;width:1px;height:20px;background:#dfe3ea"></div>
<div style="position:absolute;left:631px;top:498px;width:1px;height:20px;background:#dfe3ea"></div>
<div style="position:absolute;left:743px;top:498px;width:1px;height:20px;background:#dfe3ea"></div>
<div style="position:absolute;left:826px;top:498px;width:1px;height:20px;background:#dfe3ea"></div>
<div style="position:absolute;left:936px;top:498px;width:1px;height:20px;background:#dfe3ea"></div>
<div style="position:absolute;left:1188px;top:498px;width:1px;height:20px;background:#dfe3ea"></div>
<div class="t" style="left:326px;top:498px;width:245px;overflow:hidden;letter-spacing:-0.18px;">Person.Person</div>
<div class="t" style="left:572px;top:498px;width:56px;text-align:right">13</div>
<div class="t" style="left:636px;top:498px;letter-spacing:0.15px">11.06.2018 13:43:11</div>
<div class="t" style="left:748px;top:498px;">{null}</div>
<div class="t" style="left:831px;top:498px;letter-spacing:0.15px">31.01.2019 16:42:42</div>
<div class="t" style="left:942px;top:498px;width:244px;overflow:hidden"></div>
<div style="position:absolute;left:307px;top:539px;width:880px;height:1px;background:#dfe3ea"></div>
<div style="position:absolute;left:307px;top:539px;width:15px;height:1px;background:#c3cad6"></div>
<div style="position:absolute;left:572px;top:519px;width:1px;height:20px;background:#dfe3ea"></div>
<div style="position:absolute;left:631px;top:519px;width:1px;height:20px;background:#dfe3ea"></div>
<div style="position:absolute;left:743px;top:519px;width:1px;height:20px;background:#dfe3ea"></div>
<div style="position:absolute;left:826px;top:519px;width:1px;height:20px;background:#dfe3ea"></div>
<div style="position:absolute;left:936px;top:519px;width:1px;height:20px;background:#dfe3ea"></div>
<div style="position:absolute;left:1188px;top:519px;width:1px;height:20px;background:#dfe3ea"></div>
<div class="t" style="left:326px;top:519px;width:245px;overflow:hidden;letter-spacing:-0.18px;">Person.PersonPhone</div>
<div class="t" style="left:572px;top:519px;width:56px;text-align:right">4</div>
<div class="t" style="left:636px;top:519px;letter-spacing:0.15px">11.06.2018 13:43:11</div>
<div class="t" style="left:748px;top:519px;">{null}</div>
<div class="t" style="left:831px;top:519px;letter-spacing:0.15px">11.06.2018 13:43:18</div>
<div class="t" style="left:942px;top:519px;width:244px;overflow:hidden">Telephone number and type of a person.</div>
<div style="position:absolute;left:307px;top:560px;width:880px;height:1px;background:#dfe3ea"></div>
<div style="position:absolute;left:307px;top:560px;width:15px;height:1px;background:#c3cad6"></div>
<div style="position:absolute;left:572px;top:540px;width:1px;height:20px;background:#dfe3ea"></div>
<div style="position:absolute;left:631px;top:540px;width:1px;height:20px;background:#dfe3ea"></div>
<div style="position:absolute;left:743px;top:540px;width:1px;height:20px;background:#dfe3ea"></div>
<div style="position:absolute;left:826px;top:540px;width:1px;height:20px;background:#dfe3ea"></div>
<div style="position:absolute;left:936px;top:540px;width:1px;height:20px;background:#dfe3ea"></div>
<div style="position:absolute;left:1188px;top:540px;width:1px;height:20px;background:#dfe3ea"></div>
<div class="t" style="left:326px;top:540px;width:245px;overflow:hidden;letter-spacing:-0.18px;">Person.PhoneNumberType</div>
<div class="t" style="left:572px;top:540px;width:56px;text-align:right">3</div>
<div class="t" style="left:636px;top:540px;letter-spacing:0.15px">11.06.2018 13:43:11</div>
<div class="t" style="left:748px;top:540px;">{null}</div>
<div class="t" style="left:831px;top:540px;letter-spacing:0.15px">11.06.2018 13:43:18</div>
<div class="t" style="left:942px;top:540px;width:244px;overflow:hidden">Type of phone number of a person.</div>
<div style="position:absolute;left:307px;top:581px;width:880px;height:1px;background:#dfe3ea"></div>
<div style="position:absolute;left:307px;top:581px;width:15px;height:1px;background:#c3cad6"></div>
<div style="position:absolute;left:572px;top:561px;width:1px;height:20px;background:#dfe3ea"></div>
<div style="position:absolute;left:631px;top:561px;width:1px;height:20px;background:#dfe3ea"></div>
<div style="position:absolute;left:743px;top:561px;width:1px;height:20px;background:#dfe3ea"></div>
<div style="position:absolute;left:826px;top:561px;width:1px;height:20px;background:#dfe3ea"></div>
<div style="position:absolute;left:936px;top:561px;width:1px;height:20px;background:#dfe3ea"></div>
<div style="position:absolute;left:1188px;top:561px;width:1px;height:20px;background:#dfe3ea"></div>
<div class="t" style="left:326px;top:561px;width:245px;overflow:hidden;letter-spacing:-0.18px;">Person.StateProvince</div>
<div class="t" style="left:572px;top:561px;width:56px;text-align:right">8</div>
<div class="t" style="left:636px;top:561px;letter-spacing:0.15px">11.06.2018 13:43:12</div>
<div class="t" style="left:748px;top:561px;">{null}</div>
<div class="t" style="left:831px;top:561px;letter-spacing:0.15px">11.06.2018 13:43:20</div>
<div class="t" style="left:942px;top:561px;width:244px;overflow:hidden">State and province lookup table.</div>
<div style="position:absolute;left:307px;top:602px;width:880px;height:1px;background:#dfe3ea"></div>
<div style="position:absolute;left:307px;top:602px;width:15px;height:1px;background:#c3cad6"></div>
<div style="position:absolute;left:572px;top:582px;width:1px;height:20px;background:#dfe3ea"></div>
<div style="position:absolute;left:631px;top:582px;width:1px;height:20px;background:#dfe3ea"></div>
<div style="position:absolute;left:743px;top:582px;width:1px;height:20px;background:#dfe3ea"></div>
<div style="position:absolute;left:826px;top:582px;width:1px;height:20px;background:#dfe3ea"></div>
<div style="position:absolute;left:936px;top:582px;width:1px;height:20px;background:#dfe3ea"></div>
<div style="position:absolute;left:1188px;top:582px;width:1px;height:20px;background:#dfe3ea"></div>
<div class="t" style="left:326px;top:582px;width:245px;overflow:hidden;letter-spacing:-0.18px;">Production.BillOfMaterials</div>
<div class="t" style="left:572px;top:582px;width:56px;text-align:right">9</div>
<div class="t" style="left:636px;top:582px;letter-spacing:0.15px">11.06.2018 13:42:59</div>
<div class="t" style="left:748px;top:582px;">{null}</div>
<div class="t" style="left:831px;top:582px;letter-spacing:0.15px">11.06.2018 13:43:18</div>
<div class="t" style="left:942px;top:582px;width:244px;overflow:hidden">Items required to make bicycles and bicycle sub...</div>
<div style="position:absolute;left:307px;top:623px;width:880px;height:1px;background:#dfe3ea"></div>
<div style="position:absolute;left:307px;top:623px;width:15px;height:1px;background:#c3cad6"></div>
<div style="position:absolute;left:572px;top:603px;width:1px;height:20px;background:#dfe3ea"></div>
<div style="position:absolute;left:631px;top:603px;width:1px;height:20px;background:#dfe3ea"></div>
<div style="position:absolute;left:743px;top:603px;width:1px;height:20px;background:#dfe3ea"></div>
<div style="position:absolute;left:826px;top:603px;width:1px;height:20px;background:#dfe3ea"></div>
<div style="position:absolute;left:936px;top:603px;width:1px;height:20px;background:#dfe3ea"></div>
<div style="position:absolute;left:1188px;top:603px;width:1px;height:20px;background:#dfe3ea"></div>
<div class="t" style="left:326px;top:603px;width:245px;overflow:hidden;letter-spacing:-0.18px;">Production.Culture</div>
<div class="t" style="left:572px;top:603px;width:56px;text-align:right">3</div>
<div class="t" style="left:636px;top:603px;letter-spacing:0.15px">11.06.2018 13:42:59</div>
<div class="t" style="left:748px;top:603px;">{null}</div>
<div class="t" style="left:831px;top:603px;letter-spacing:0.15px">11.06.2018 13:43:19</div>
<div class="t" style="left:942px;top:603px;width:244px;overflow:hidden">Lookup table containing the languages in which ...</div>
<div style="position:absolute;left:307px;top:644px;width:880px;height:1px;background:#dfe3ea"></div>
<div style="position:absolute;left:307px;top:644px;width:15px;height:1px;background:#c3cad6"></div>
<div style="position:absolute;left:572px;top:624px;width:1px;height:20px;background:#dfe3ea"></div>
<div style="position:absolute;left:631px;top:624px;width:1px;height:20px;background:#dfe3ea"></div>
<div style="position:absolute;left:743px;top:624px;width:1px;height:20px;background:#dfe3ea"></div>
<div style="position:absolute;left:826px;top:624px;width:1px;height:20px;background:#dfe3ea"></div>
<div style="position:absolute;left:936px;top:624px;width:1px;height:20px;background:#dfe3ea"></div>
<div style="position:absolute;left:1188px;top:624px;width:1px;height:20px;background:#dfe3ea"></div>
<div class="t" style="left:326px;top:624px;width:245px;overflow:hidden;letter-spacing:-0.18px;">Production.Document</div>
<div class="t" style="left:572px;top:624px;width:56px;text-align:right">14</div>
<div class="t" style="left:636px;top:624px;letter-spacing:0.15px">11.06.2018 13:43:11</div>
<div class="t" style="left:748px;top:624px;">{null}</div>
<div class="t" style="left:831px;top:624px;letter-spacing:0.15px">11.06.2018 13:43:19</div>
<div class="t" style="left:942px;top:624px;width:244px;overflow:hidden">Product maintenance documents.</div>
<div style="position:absolute;left:307px;top:665px;width:880px;height:1px;background:#dfe3ea"></div>
<div style="position:absolute;left:307px;top:665px;width:15px;height:1px;background:#c3cad6"></div>
<div style="position:absolute;left:572px;top:645px;width:1px;height:20px;background:#dfe3ea"></div>
<div style="position:absolute;left:631px;top:645px;width:1px;height:20px;background:#dfe3ea"></div>
<div style="position:absolute;left:743px;top:645px;width:1px;height:20px;background:#dfe3ea"></div>
<div style="position:absolute;left:826px;top:645px;width:1px;height:20px;background:#dfe3ea"></div>
<div style="position:absolute;left:936px;top:645px;width:1px;height:20px;background:#dfe3ea"></div>
<div style="position:absolute;left:1188px;top:645px;width:1px;height:20px;background:#dfe3ea"></div>
<div class="t" style="left:326px;top:645px;width:245px;overflow:hidden;letter-spacing:-0.18px;">Production.Illustration</div>
<div class="t" style="left:572px;top:645px;width:56px;text-align:right">3</div>
<div class="t" style="left:636px;top:645px;letter-spacing:0.15px">11.06.2018 13:43:11</div>
<div class="t" style="left:748px;top:645px;">{null}</div>
<div class="t" style="left:831px;top:645px;letter-spacing:0.15px">11.06.2018 13:43:19</div>
<div class="t" style="left:942px;top:645px;width:244px;overflow:hidden">Bicycle assembly diagrams.</div>
<div style="position:absolute;left:307px;top:686px;width:880px;height:1px;background:#dfe3ea"></div>
<div style="position:absolute;left:307px;top:686px;width:15px;height:1px;background:#c3cad6"></div>
<div style="position:absolute;left:572px;top:666px;width:1px;height:20px;background:#dfe3ea"></div>
<div style="position:absolute;left:631px;top:666px;width:1px;height:20px;background:#dfe3ea"></div>
<div style="position:absolute;left:743px;top:666px;width:1px;height:20px;background:#dfe3ea"></div>
<div style="position:absolute;left:826px;top:666px;width:1px;height:20px;background:#dfe3ea"></div>
<div style="position:absolute;left:936px;top:666px;width:1px;height:20px;background:#dfe3ea"></div>
<div style="position:absolute;left:1188px;top:666px;width:1px;height:20px;background:#dfe3ea"></div>
<div class="t" style="left:326px;top:666px;width:245px;overflow:hidden;letter-spacing:-0.18px;">Production.Location</div>
<div class="t" style="left:572px;top:666px;width:56px;text-align:right">5</div>
<div class="t" style="left:636px;top:666px;letter-spacing:0.15px">11.06.2018 13:43:11</div>
<div class="t" style="left:748px;top:666px;">{null}</div>
<div class="t" style="left:831px;top:666px;letter-spacing:0.15px">11.06.2018 13:43:19</div>
<div class="t" style="left:942px;top:666px;width:244px;overflow:hidden">Product inventory and manufacturing locations.</div>
<div style="position:absolute;left:1188px;top:78px;width:12px;height:609px;background:#f3f3f6"></div>
<svg style="position:absolute;left:1188px;top:84px" width="8" height="5" viewBox="0 0 8 5"><path d="M0 4.5 L4 0.5 L8 4.5 Z" fill="#7b8394"/></svg>
<div style="position:absolute;left:1189px;top:95px;width:6px;height:225px;background:#d9d9dc;border-radius:3px"></div>
<svg style="position:absolute;left:1188px;top:678px" width="8" height="5" viewBox="0 0 8 5"><path d="M0 0.5 H8 L4 4.5 Z" fill="#7b8394"/></svg>
<div style="position:absolute;left:307px;top:687px;width:881px;height:18px;background:#f3f3f6"></div>
<div style="position:absolute;left:1183px;top:687px;width:17px;height:18px;background:#fff"></div>
<svg style="position:absolute;left:313px;top:693px" width="5" height="8" viewBox="0 0 5 8"><path d="M4.5 0 V8 L0.5 4 Z" fill="#7b8394"/></svg>
<div style="position:absolute;left:324px;top:693px;width:755px;height:7px;background:#d9d9dc;border-radius:4px"></div>
<svg style="position:absolute;left:1173px;top:693px" width="5" height="8" viewBox="0 0 5 8"><path d="M0.5 0 V8 L4.5 4 Z" fill="#7b8394"/></svg>
<div style="position:absolute;left:0px;top:705px;width:1201px;height:1px;background:#8a95a6"></div>
<div style="position:absolute;left:0px;top:706px;width:1201px;height:4px;background:#7eaacf"></div>
<div style="position:absolute;left:426px;top:211px;width:163px;height:502px;background:rgba(0,0,0,0.25);filter:blur(1.5px)"></div>
<div style="position:absolute;left:422px;top:204px;width:163px;height:502px;background:#dde7f0;border:1px solid #96a2b2;box-sizing:border-box"></div>
<div class="t" style="left:457px;top:206px;line-height:21px;font-size:11.7px"><u>C</u>reate Table...</div>
<svg style="position:absolute;left:430px;top:210px" width="14" height="14" viewBox="0 0 14 14"><rect x="0.5" y="0.5" width="13" height="13" fill="#f8f8fe" stroke="#4a68c0"/><path d="M0.5 13.5 H13.5 V0.5" fill="none" stroke="#28388a"/><rect x="1" y="1" width="12" height="3" fill="#6a94e4"/><rect x="1" y="2" width="12" height="1" fill="#a6c2f2"/><g fill="#8a92d8"><rect x="2" y="5" width="2" height="1"/><rect x="2" y="7" width="2" height="1"/><rect x="2" y="9" width="2" height="1"/><rect x="2" y="11" width="2" height="1"/><rect x="6" y="5" width="2" height="1"/><rect x="6" y="7" width="2" height="1"/><rect x="6" y="9" width="2" height="1"/><rect x="6" y="11" width="2" height="1"/><rect x="10" y="5" width="2" height="1"/><rect x="10" y="7" width="2" height="1"/><rect x="10" y="9" width="2" height="1"/><rect x="10" y="11" width="2" height="1"/></g></svg>
<svg style="position:absolute;left:429px;top:208px" width="8" height="8" viewBox="0 0 8 8"><rect x="0.3" y="0.3" width="7.4" height="7.4" fill="#fff48a"/><path d="M5.60 4.00 L8.00 4.00" stroke="#f01a00" stroke-width="1.3"/><path d="M5.13 5.13 L7.68 7.68" stroke="#f01a00" stroke-width="1.3"/><path d="M4.00 5.60 L4.00 8.00" stroke="#f01a00" stroke-width="1.3"/><path d="M2.87 5.13 L0.32 7.68" stroke="#f01a00" stroke-width="1.3"/><path d="M2.40 4.00 L0.00 4.00" stroke="#f01a00" stroke-width="1.3"/><path d="M2.87 2.87 L0.32 0.32" stroke="#f01a00" stroke-width="1.3"/><path d="M4.00 2.40 L4.00 0.00" stroke="#f01a00" stroke-width="1.3"/><path d="M5.13 2.87 L7.68 0.32" stroke="#f01a00" stroke-width="1.3"/><circle cx="4.0" cy="4.0" r="1.1" fill="#ffffff"/></svg>
<div class="t" style="left:457px;top:228px;line-height:21px;font-size:11.7px">C<u>r</u>eate Like Table...</div>
<svg style="position:absolute;left:430px;top:232px" width="14" height="14" viewBox="0 0 14 14"><rect x="0.5" y="0.5" width="13" height="13" fill="#f8f8fe" stroke="#4a68c0"/><path d="M0.5 13.5 H13.5 V0.5" fill="none" stroke="#28388a"/><rect x="1" y="1" width="12" height="3" fill="#6a94e4"/><rect x="1" y="2" width="12" height="1" fill="#a6c2f2"/><g fill="#8a92d8"><rect x="2" y="5" width="2" height="1"/><rect x="2" y="7" width="2" height="1"/><rect x="2" y="9" width="2" height="1"/><rect x="2" y="11" width="2" height="1"/><rect x="6" y="5" width="2" height="1"/><rect x="6" y="7" width="2" height="1"/><rect x="6" y="9" width="2" height="1"/><rect x="6" y="11" width="2" height="1"/><rect x="10" y="5" width="2" height="1"/><rect x="10" y="7" width="2" height="1"/><rect x="10" y="9" width="2" height="1"/><rect x="10" y="11" width="2" height="1"/></g></svg>
<svg style="position:absolute;left:429px;top:230px" width="8" height="8" viewBox="0 0 8 8"><rect x="0.3" y="0.3" width="7.4" height="7.4" fill="#fff48a"/><path d="M5.60 4.00 L8.00 4.00" stroke="#f01a00" stroke-width="1.3"/><path d="M5.13 5.13 L7.68 7.68" stroke="#f01a00" stroke-width="1.3"/><path d="M4.00 5.60 L4.00 8.00" stroke="#f01a00" stroke-width="1.3"/><path d="M2.87 5.13 L0.32 7.68" stroke="#f01a00" stroke-width="1.3"/><path d="M2.40 4.00 L0.00 4.00" stroke="#f01a00" stroke-width="1.3"/><path d="M2.87 2.87 L0.32 0.32" stroke="#f01a00" stroke-width="1.3"/><path d="M4.00 2.40 L4.00 0.00" stroke="#f01a00" stroke-width="1.3"/><path d="M5.13 2.87 L7.68 0.32" stroke="#f01a00" stroke-width="1.3"/><circle cx="4.0" cy="4.0" r="1.1" fill="#ffffff"/></svg>
<svg style="position:absolute;left:433px;top:228px" width="8" height="8" viewBox="0 0 8 8"><rect x="0.3" y="0.3" width="7.4" height="7.4" fill="#fff48a"/><path d="M5.60 4.00 L8.00 4.00" stroke="#f01a00" stroke-width="1.3"/><path d="M5.13 5.13 L7.68 7.68" stroke="#f01a00" stroke-width="1.3"/><path d="M4.00 5.60 L4.00 8.00" stroke="#f01a00" stroke-width="1.3"/><path d="M2.87 5.13 L0.32 7.68" stroke="#f01a00" stroke-width="1.3"/><path d="M2.40 4.00 L0.00 4.00" stroke="#f01a00" stroke-width="1.3"/><path d="M2.87 2.87 L0.32 0.32" stroke="#f01a00" stroke-width="1.3"/><path d="M4.00 2.40 L4.00 0.00" stroke="#f01a00" stroke-width="1.3"/><path d="M5.13 2.87 L7.68 0.32" stroke="#f01a00" stroke-width="1.3"/><circle cx="4.0" cy="4.0" r="1.1" fill="#ffffff"/></svg>
<div class="t" style="left:457px;top:250px;line-height:21px;font-size:11.7px"><b><u>A</u>lter Table...</b></div>
<svg style="position:absolute;left:430px;top:254px" width="14" height="14" viewBox="0 0 14 14"><rect x="0.5" y="0.5" width="13" height="13" fill="#f8f8fe" stroke="#4a68c0"/><path d="M0.5 13.5 H13.5 V0.5" fill="none" stroke="#28388a"/><rect x="1" y="1" width="12" height="3" fill="#6a94e4"/><rect x="1" y="2" width="12" height="1" fill="#a6c2f2"/><g fill="#8a92d8"><rect x="2" y="5" width="2" height="1"/><rect x="2" y="7" width="2" height="1"/><rect x="2" y="9" width="2" height="1"/><rect x="2" y="11" width="2" height="1"/><rect x="6" y="5" width="2" height="1"/><rect x="6" y="7" width="2" height="1"/><rect x="6" y="9" width="2" height="1"/><rect x="6" y="11" width="2" height="1"/><rect x="10" y="5" width="2" height="1"/><rect x="10" y="7" width="2" height="1"/><rect x="10" y="9" width="2" height="1"/><rect x="10" y="11" width="2" height="1"/></g></svg>
<svg style="position:absolute;left:427px;top:251px" width="12" height="13" viewBox="0 0 12 13"><path d="M1.5 6.5 H7 V11.5 H1.5 Z" fill="#f4f4f4" stroke="#8a8a8a" stroke-width="0.9"/><path d="M3 10 L10 2.5" stroke="#b07a10" stroke-width="3.2" stroke-linecap="round"/><path d="M3 10 L10 2.5" stroke="#f6d040" stroke-width="1.8" stroke-linecap="round"/><path d="M10 2.5 L11 1.5" stroke="#e06050" stroke-width="2"/></svg>
<div class="t" style="left:457px;top:272px;line-height:21px;font-size:11.7px"><u>D</u>rop Table...</div>
<svg style="position:absolute;left:430px;top:276px" width="14" height="14" viewBox="0 0 14 14"><rect x="0.5" y="0.5" width="13" height="13" fill="#f8f8fe" stroke="#4a68c0"/><path d="M0.5 13.5 H13.5 V0.5" fill="none" stroke="#28388a"/><rect x="1" y="1" width="12" height="3" fill="#6a94e4"/><rect x="1" y="2" width="12" height="1" fill="#a6c2f2"/><g fill="#8a92d8"><rect x="2" y="5" width="2" height="1"/><rect x="2" y="7" width="2" height="1"/><rect x="2" y="9" width="2" height="1"/><rect x="2" y="11" width="2" height="1"/><rect x="6" y="5" width="2" height="1"/><rect x="6" y="7" width="2" height="1"/><rect x="6" y="9" width="2" height="1"/><rect x="6" y="11" width="2" height="1"/><rect x="10" y="5" width="2" height="1"/><rect x="10" y="7" width="2" height="1"/><rect x="10" y="9" width="2" height="1"/><rect x="10" y="11" width="2" height="1"/></g></svg>
<svg style="position:absolute;left:427px;top:274px" width="12" height="11" viewBox="0 0 12 11"><path d="M1 2 L5 0.5 L11 8.5 L9 10.5 Z" fill="#d01010" stroke="#700808" stroke-width="0.8"/></svg>
<div class="t" style="left:457px;top:294px;line-height:21px;font-size:11.7px">Edit <u>P</u>ermissions...</div>
<svg style="position:absolute;left:428px;top:296px" width="12" height="14" viewBox="0 0 12 14"><defs><linearGradient id="dbg" x1="0" x2="1"><stop offset="0" stop-color="#d9a520"/><stop offset="0.45" stop-color="#fff2a0"/><stop offset="1" stop-color="#d49a18"/></linearGradient></defs><path d="M0.5 3 V10.5 A5.5 2.5 0 0 0 11.5 10.5 V3" fill="url(#dbg)" stroke="#b07c10"/><ellipse cx="6" cy="3" rx="5.5" ry="2.5" fill="#fff7c8" stroke="#b07c10"/></svg>
<svg style="position:absolute;left:434px;top:298px" width="11" height="6" viewBox="0 0 11 6"><path d="M1 0 L3 5 L5.5 1 L8 5 L10 0" stroke="#2a60c0" stroke-width="1.3" fill="none"/></svg>
<svg style="position:absolute;left:433px;top:302px" width="12" height="11" viewBox="0 0 12 11"><path d="M6 0 L7.6 4 L12 4.2 L8.5 6.9 L9.8 11 L6 8.6 L2.2 11 L3.5 6.9 L0 4.2 L4.4 4 Z" fill="#ffc830" stroke="#d08a10" stroke-width="0.7"/></svg>
<div class="t" style="left:457px;top:316px;line-height:21px;font-size:11.7px">Rena<u>m</u>e Table...</div>
<svg style="position:absolute;left:430px;top:320px" width="14" height="14" viewBox="0 0 14 14"><rect x="0.5" y="0.5" width="13" height="13" fill="#f8f8fe" stroke="#4a68c0"/><path d="M0.5 13.5 H13.5 V0.5" fill="none" stroke="#28388a"/><rect x="1" y="1" width="12" height="3" fill="#6a94e4"/><rect x="1" y="2" width="12" height="1" fill="#a6c2f2"/><g fill="#8a92d8"><rect x="2" y="5" width="2" height="1"/><rect x="2" y="7" width="2" height="1"/><rect x="2" y="9" width="2" height="1"/><rect x="2" y="11" width="2" height="1"/><rect x="6" y="5" width="2" height="1"/><rect x="6" y="7" width="2" height="1"/><rect x="6" y="9" width="2" height="1"/><rect x="6" y="11" width="2" height="1"/><rect x="10" y="5" width="2" height="1"/><rect x="10" y="7" width="2" height="1"/><rect x="10" y="9" width="2" height="1"/><rect x="10" y="11" width="2" height="1"/></g></svg>
<svg style="position:absolute;left:429px;top:318px" width="15" height="9" viewBox="0 0 15 9"><rect x="0.5" y="1.5" width="9" height="6" fill="#fff" stroke="#2a4aa8" stroke-width="1"/><path d="M2 3 H4 M3 3 V6 M2 6 H4" stroke="#202020" stroke-width="0.8"/><path d="M6 8 L12 2" stroke="#303030" stroke-width="2.6" stroke-linecap="round"/><path d="M6 8 L12 2" stroke="#f2c020" stroke-width="1.5"/><circle cx="12.5" cy="1.5" r="1.4" fill="#e03030"/></svg>
<div class="t" style="left:457px;top:338px;line-height:21px;font-size:11.7px">Create Inde<u>x</u>...</div>
<svg style="position:absolute;left:430px;top:342px" width="14" height="14" viewBox="0 0 14 14"><rect x="0.5" y="0.5" width="13" height="13" fill="#f8f8fe" stroke="#4a68c0"/><path d="M0.5 13.5 H13.5 V0.5" fill="none" stroke="#28388a"/><rect x="1" y="1" width="12" height="3" fill="#6a94e4"/><rect x="1" y="2" width="12" height="1" fill="#a6c2f2"/><g fill="#8a92d8"><rect x="2" y="5" width="2" height="1"/><rect x="2" y="7" width="2" height="1"/><rect x="2" y="9" width="2" height="1"/><rect x="2" y="11" width="2" height="1"/><rect x="6" y="5" width="2" height="1"/><rect x="6" y="7" width="2" height="1"/><rect x="6" y="9" width="2" height="1"/><rect x="6" y="11" width="2" height="1"/><rect x="10" y="5" width="2" height="1"/><rect x="10" y="7" width="2" height="1"/><rect x="10" y="9" width="2" height="1"/><rect x="10" y="11" width="2" height="1"/></g></svg>
<svg style="position:absolute;left:428px;top:340px" width="8" height="8" viewBox="0 0 8 8"><rect x="0.3" y="0.3" width="7.4" height="7.4" fill="#fff48a"/><path d="M5.60 4.00 L8.00 4.00" stroke="#f01a00" stroke-width="1.3"/><path d="M5.13 5.13 L7.68 7.68" stroke="#f01a00" stroke-width="1.3"/><path d="M4.00 5.60 L4.00 8.00" stroke="#f01a00" stroke-width="1.3"/><path d="M2.87 5.13 L0.32 7.68" stroke="#f01a00" stroke-width="1.3"/><path d="M2.40 4.00 L0.00 4.00" stroke="#f01a00" stroke-width="1.3"/><path d="M2.87 2.87 L0.32 0.32" stroke="#f01a00" stroke-width="1.3"/><path d="M4.00 2.40 L4.00 0.00" stroke="#f01a00" stroke-width="1.3"/><path d="M5.13 2.87 L7.68 0.32" stroke="#f01a00" stroke-width="1.3"/><circle cx="4.0" cy="4.0" r="1.1" fill="#ffffff"/></svg>
<svg style="position:absolute;left:437px;top:340px" width="8" height="5" viewBox="0 0 8 5"><path d="M0 0 H8 L4 4.5 Z" fill="#f0c818" stroke="#9a7a10" stroke-width="0.6"/></svg>
<div class="t" style="left:457px;top:360px;line-height:21px;font-size:11.7px">Data Compare</div>
<svg style="position:absolute;left:428px;top:362px" width="17" height="18" viewBox="0 0 17 18"><rect x="0.5" y="0.5" width="11" height="10" fill="#f0f4fa" stroke="#6a82c0"/><rect x="1" y="1" width="10" height="2" fill="#8aa8e8"/><rect x="4.5" y="5.5" width="11" height="10" fill="#f4f6fb" stroke="#6a82c0"/><path d="M5.5 11 A4.5 3.5 0 0 1 13 7.5" stroke="#e03838" stroke-width="2.2" fill="none"/><path d="M12 7 L15 7 L14 10 Z" fill="#e03838"/><path d="M7 14.5 A4.5 3.5 0 0 0 14.5 11" stroke="#38b038" stroke-width="2.2" fill="none"/><path d="M8 16.5 L5 14 L8.5 12.5 Z" fill="#38b038"/></svg>
<div class="t" style="left:457px;top:382px;line-height:21px;font-size:11.7px">Data <u>G</u>enerator</div>
<svg style="position:absolute;left:429px;top:385px" width="18" height="16" viewBox="0 0 18 16"><path d="M0.5 6 H5 V4 L8.5 7.5 L5 11 V9 H0.5 Z" fill="#7aa0e8" stroke="#2a50b0" stroke-width="0.8"/><text x="8.5" y="7" font-size="7" fill="#202020" font-family="Liberation Sans">1</text><text x="13" y="10" font-size="7" fill="#202020" font-family="Liberation Sans">2</text><text x="8.5" y="15" font-size="7" fill="#202020" font-family="Liberation Sans">3</text></svg>
<div class="t" style="left:457px;top:404px;line-height:21px;font-size:11.7px">Schema Compare</div>
<svg style="position:absolute;left:428px;top:407px" width="17" height="16" viewBox="0 0 17 16"><path d="M7 4 V6 M12 4 V6 M3 6 H14 M3 6 V8 M8.5 6 V8 M14 6 V8" stroke="#3a70d0" stroke-width="0.9" fill="none"/><rect x="4.5" y="1" width="5" height="3" fill="#f0d060" stroke="#3a70d0" stroke-width="0.8"/><rect x="10" y="1" width="5" height="3" fill="#40a8f0" stroke="#2a60c0" stroke-width="0.8"/><rect x="0.5" y="8" width="5" height="3" fill="#f0d060" stroke="#3a70d0" stroke-width="0.8"/><rect x="6" y="8" width="5" height="3" fill="#40a8f0" stroke="#2a60c0" stroke-width="0.8"/><rect x="11.5" y="8" width="5" height="3" fill="#40a8f0" stroke="#2a60c0" stroke-width="0.8"/><path d="M2 14 H8" stroke="#f01010" stroke-width="1.4"/><path d="M0.5 14 L3.5 11.5 V16.5 Z" fill="#f01010"/><path d="M9 14 H15" stroke="#1890f0" stroke-width="1.4"/><path d="M16.5 14 L13.5 11.5 V16.5 Z" fill="#1890f0"/></svg>
<div class="t" style="left:457px;top:426px;line-height:21px;font-size:11.7px"><u>D</u>DL Script...</div>
<svg style="position:absolute;left:428px;top:427px" width="18" height="19" viewBox="0 0 18 19"><rect x="6.5" y="1.5" width="8" height="9" fill="#fff8d8" stroke="#c09020" stroke-width="1.2"/><path d="M8 4 H13 M8 6 H13" stroke="#c0c0c0" stroke-width="0.8"/><path d="M0.5 5 H5 V3 L8.5 6 L5 9 V7 H0.5 Z" fill="#7aa0e8" stroke="#2a50b0" stroke-width="0.8"/><text x="2.5" y="18" font-size="9" fill="#202020" font-family="Liberation Sans">ddl</text></svg>
<div style="position:absolute;left:459px;top:449px;width:119px;height:1px;background:#b9c1cc"></div>
<div class="t" style="left:457px;top:451px;line-height:21px;font-size:11.7px">Tas<u>k</u>s</div>
<svg style="position:absolute;left:567px;top:457px" width="5" height="9" viewBox="0 0 5 9"><path d="M0 0 L4.5 4.5 L0 9 Z" fill="#1a2438"/></svg>
<div class="t" style="left:457px;top:473px;line-height:21px;font-size:11.7px">Stora<u>g</u>e</div>
<svg style="position:absolute;left:567px;top:479px" width="5" height="9" viewBox="0 0 5 9"><path d="M0 0 L4.5 4.5 L0 9 Z" fill="#1a2438"/></svg>
<div style="position:absolute;left:459px;top:496px;width:119px;height:1px;background:#b9c1cc"></div>
<div class="t" style="left:457px;top:498px;line-height:21px;font-size:11.7px">MS_Description...</div>
<svg style="position:absolute;left:431px;top:503px" width="12" height="12" viewBox="0 0 12 12"><defs><linearGradient id="msg" x1="0" y1="0" x2="1" y2="1"><stop offset="0" stop-color="#fff7b0"/><stop offset="1" stop-color="#f0c020"/></linearGradient></defs><rect x="0.6" y="0.6" width="10.8" height="10.8" rx="1" fill="url(#msg)" stroke="#b88a10" stroke-width="1.2"/><path d="M0.6 6.5 H5 V11.4" fill="none" stroke="#b88a10" stroke-width="1"/></svg>
<div style="position:absolute;left:459px;top:521px;width:119px;height:1px;background:#b9c1cc"></div>
<div class="t" style="left:457px;top:523px;line-height:21px;font-size:11.7px"><u>S</u>end To</div>
<svg style="position:absolute;left:567px;top:529px" width="5" height="9" viewBox="0 0 5 9"><path d="M0 0 L4.5 4.5 L0 9 Z" fill="#1a2438"/></svg>
<div class="t" style="left:457px;top:545px;line-height:21px;font-size:11.7px"><u>V</u>ersion Control</div>
<svg style="position:absolute;left:567px;top:551px" width="5" height="9" viewBox="0 0 5 9"><path d="M0 0 L4.5 4.5 L0 9 Z" fill="#1a2438"/></svg>
<div class="t" style="left:457px;top:567px;line-height:21px;font-size:11.7px"><u>G</u>enerate SQL</div>
<svg style="position:absolute;left:567px;top:573px" width="5" height="9" viewBox="0 0 5 9"><path d="M0 0 L4.5 4.5 L0 9 Z" fill="#1a2438"/></svg>
<div style="position:absolute;left:459px;top:590px;width:119px;height:1px;background:#b9c1cc"></div>
<div class="t" style="left:457px;top:592px;line-height:21px;font-size:11.7px"><u>C</u>opy Rows</div>
<div class="t" style="left:457px;top:614px;line-height:21px;font-size:11.7px">Copy Ce<u>l</u>ls</div>
<div class="t" style="left:457px;top:636px;line-height:21px;font-size:11.7px"><u>P</u>rint...</div>
<svg style="position:absolute;left:428px;top:638px" width="18" height="17" viewBox="0 0 18 17"><rect x="4" y="0.5" width="9" height="5" fill="#e8f0ec" stroke="#a8b0b0" stroke-width="0.8"/><rect x="1" y="5" width="15" height="8" rx="1.5" fill="#b8b8c0"/><rect x="3" y="5" width="11" height="8" fill="#50525c"/><rect x="3" y="10" width="11" height="1" fill="#80828c"/><circle cx="14.5" cy="9" r="0.9" fill="#30e030"/><defs><linearGradient id="prg" x1="0" x2="1"><stop offset="0" stop-color="#2090e0"/><stop offset="0.35" stop-color="#e02090"/><stop offset="0.7" stop-color="#f0e040"/><stop offset="1" stop-color="#a0a020"/></linearGradient></defs><rect x="3" y="13" width="11" height="3" rx="1" fill="url(#prg)"/></svg>
<div class="t" style="left:457px;top:658px;line-height:21px;font-size:11.7px">S<u>h</u>ow</div>
<svg style="position:absolute;left:567px;top:664px" width="5" height="9" viewBox="0 0 5 9"><path d="M0 0 L4.5 4.5 L0 9 Z" fill="#1a2438"/></svg>
<div style="position:absolute;left:459px;top:681px;width:119px;height:1px;background:#b9c1cc"></div>
<div class="t" style="left:457px;top:683px;line-height:21px;font-size:11.7px"><u>D</u>efault Layout...</div>
<div style="position:absolute;left:15px;top:170px;width:207px;height:31px;border:5px solid #ed1c24;box-sizing:border-box"></div>
<div style="position:absolute;left:408px;top:249px;width:187px;height:25px;border:5px solid #ed1c24;box-sizing:border-box"></div>
<div style="position:absolute;left:415px;top:497px;width:174px;height:28px;border:5px solid #ed1c24;box-sizing:border-box"></div>
<div style="position:absolute;left:935px;top:54px;width:253px;height:636px;border:5px solid #22b14c;box-sizing:border-box"></div>
</body></html>
